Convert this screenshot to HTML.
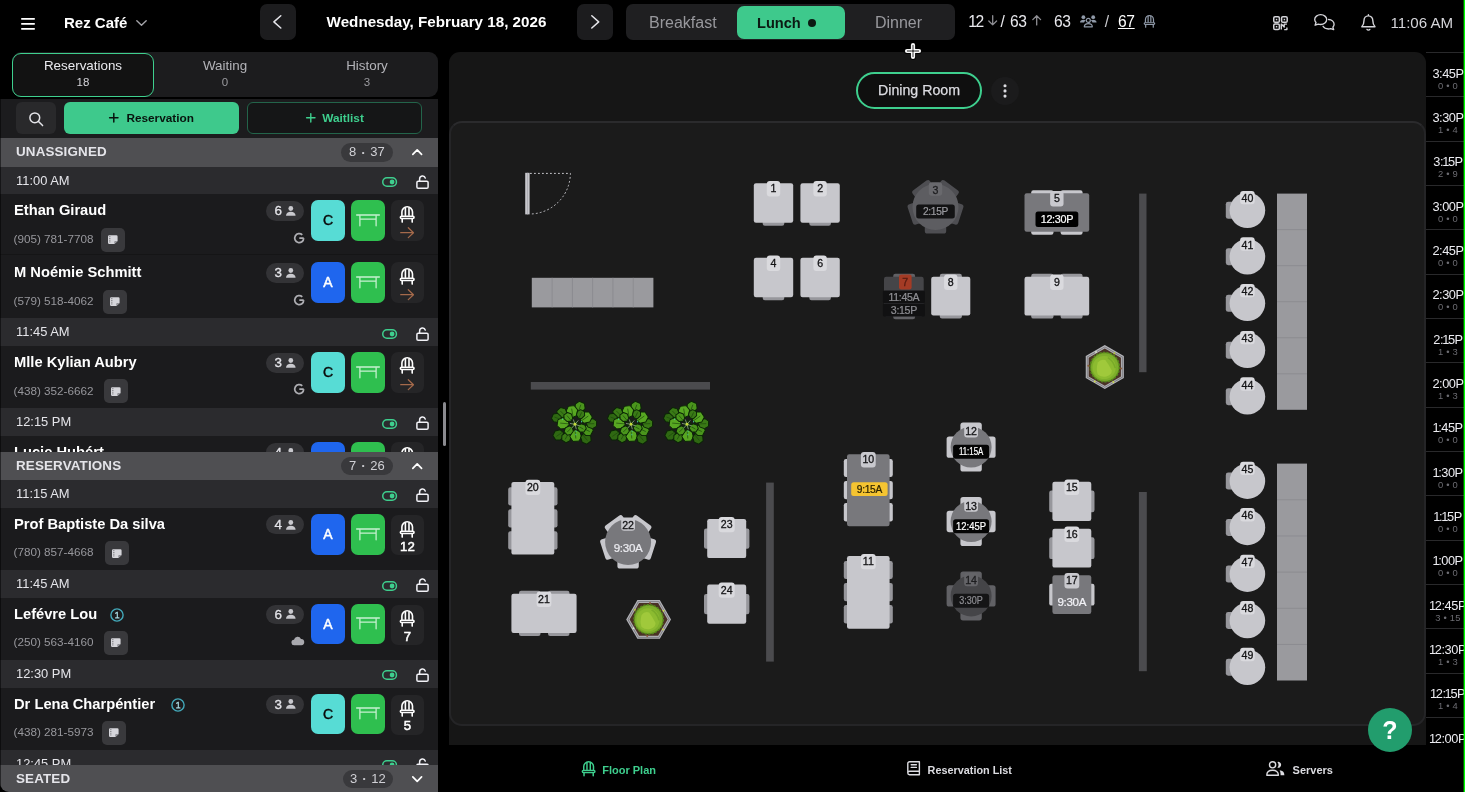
<!DOCTYPE html>
<html lang="en">
<head>
<meta charset="utf-8">
<title>Rez Café – Floor Plan</title>
<style>
*{box-sizing:border-box;margin:0;padding:0}
html,body{width:1465px;height:792px;overflow:hidden;background:#000}
body{font-family:"Liberation Sans",sans-serif;color:#fff;position:relative;-webkit-font-smoothing:antialiased}
.abs{position:absolute}
svg{display:block;overflow:visible}
#topbar,#left,#main,#tl,#nav,#help{will-change:transform}
#left:after{content:'';position:absolute;left:0;top:46.8px;width:1.3px;height:700px;background:rgba(0,0,0,.5)}
/* ---------- top bar ---------- */
#topbar{position:absolute;left:0;top:0;width:1465px;height:52px;background:#000}
.navbtn{position:absolute;top:4px;width:36px;height:36px;border-radius:7px;background:#1c1c1e}
.brand{position:absolute;left:64px;top:13px;font-size:15px;font-weight:700;line-height:20px;color:#fff;white-space:nowrap}
.date{position:absolute;left:296px;width:281px;top:11.7px;text-align:center;font-size:15.2px;font-weight:700;line-height:20px;color:#fff;white-space:nowrap}
.seg{position:absolute;left:626px;top:4px;width:329px;height:36px;border-radius:7px;background:#1f1f21}
.seg span{position:absolute;top:9px;line-height:20px;font-size:16px;color:#98989d;white-space:nowrap;transform:translateX(-50%)}
.seg .on{position:absolute;left:110.5px;top:1.5px;width:108px;height:33px;border-radius:7px;background:#3ec98c}
.seg .on b{position:absolute;left:20.5px;top:7.3px;line-height:20px;font-size:14.6px;font-weight:700;color:#0b1a13}
.seg .on i{position:absolute;left:71px;top:13.2px;width:8.5px;height:8.5px;border-radius:50%;background:#0b1a13}
.stat{position:absolute;top:11.8px;line-height:20px;font-size:15.6px;letter-spacing:-.35px;color:#e9e9ee;white-space:nowrap}
.clock{position:absolute;left:1390.5px;top:13px;line-height:20px;font-size:15.1px;color:#d4d4d9;white-space:nowrap}
/* ---------- left panel ---------- */
#left{position:absolute;left:0;top:52px;width:438px;height:740px;overflow:hidden;border-radius:0 0 0 9px}
.tabs{position:absolute;left:12px;top:0;width:426px;height:45px;background:#1c1c1e;border-radius:9px}
.tab{position:absolute;top:0;width:142px;height:45px;text-align:center;color:#b4b4b9}
.tab b{display:block;font-weight:400;font-size:13.4px;line-height:16px;margin-top:5.6px}
.tab i{display:block;font-style:normal;font-size:11.5px;line-height:14px;margin-top:1.6px;color:#9a9a9f}
.tab.on{top:.5px;height:44px;border:1.5px solid #3ecf8e;border-radius:9px;background:#121212;color:#e9e9ee}
.tab.on b{margin-top:4.4px}
.tab.on i{color:#d4d4d9}
.tools{position:absolute;left:0;top:46.8px;width:438px;height:40px;background:#1c1c1e}
.tbtn{position:absolute;top:3.7px;height:32px;border-radius:6px}
.sec{position:absolute;left:0;width:438px;height:28.2px;background:#4f4f52}
.sec b{position:absolute;left:16px;top:6px;line-height:16px;font-size:13.4px;font-weight:700;letter-spacing:.15px;color:#e4e4e9}
.sec .pill{position:absolute;top:4.8px;height:18.6px;border-radius:10px;background:#39393c;color:#d0d0d5;font-size:13px;line-height:18.6px;text-align:center;white-space:nowrap}
.sec .pill s{text-decoration:none;font-size:8px;position:relative;top:-1.5px;margin:0 2px}
.list{position:absolute;left:0;width:438px;overflow:hidden;background:#1b1b1d}
.th{position:absolute;left:0;width:438px;height:27.8px;background:#2b2b2e}
.th b{position:absolute;left:16px;top:6px;line-height:16px;font-size:12.9px;font-weight:400;color:#e4e4e9}
.row{position:absolute;left:0;width:438px;height:62px;background:#1b1b1d}
.row + .row:before{content:'';position:absolute;left:0;right:0;top:-2px;height:1px;background:rgba(0,0,0,.22)}
.row .nm{position:absolute;left:14px;top:6px;line-height:20px;font-size:14.7px;font-weight:700;color:#fff;white-space:nowrap}
.row .ph{position:absolute;left:13.5px;top:36.5px;line-height:16px;font-size:11.7px;color:#97979c;white-space:nowrap}
.row .note{position:absolute;top:33.3px;width:24px;height:24px;border-radius:5px;background:#39393c}
.row .pty{position:absolute;left:266px;top:7px;width:38px;height:19.4px;border-radius:10px;background:#333336;color:#e4e4e9;font-size:13.4px;line-height:19.4px}
.row .pty b{position:absolute;left:8.5px;top:0;font-weight:400;-webkit-text-stroke:.3px #e4e4e9}
.box{position:absolute;top:6px;width:34px;height:40.6px;border-radius:7px}
.box.srv{left:311px;text-align:center;font-size:14px;font-weight:400;-webkit-text-stroke:.45px currentColor;line-height:41.6px}
.box.tbl{left:351px;width:33.5px;background:#2fbf4f}
.box.chr{left:390.7px;width:33.5px;background:#252527}
.box.chr b{position:absolute;left:0;width:33.5px;top:23.9px;text-align:center;font-size:13.2px;line-height:16px;font-weight:400;-webkit-text-stroke:.5px #fff;color:#fff}
</style>
</head>
<body>

<div id="topbar">
<svg class="abs" style="left:21px;top:18px" width="14" height="12" viewBox="0 0 14 12" ><g fill="#fff"><rect y=".1" width="14" height="1.700" rx=".8"/><rect y="5.100" width="14" height="1.700" rx=".8"/><rect y="10.100" width="14" height="1.700" rx=".8"/></g></svg>
<div class="brand">Rez Café</div>
<svg class="abs" style="left:135.8px;top:19.6px" width="11" height="6.2" viewBox="0 0 11 6.2" ><path d="M.8 .8L5.5 5.3L10.2 .8" fill="none" stroke="#a4a4a9" stroke-width="1.4" stroke-linecap="round" stroke-linejoin="round"/></svg>
<div class="navbtn" style="left:260px"></div><svg class="abs" style="left:273.2px;top:15px" width="8.6" height="13.8" viewBox="0 0 8.6 13.8" ><path d="M7.8 .8L.9 6.9L7.8 13.0" fill="none" stroke="#e4e4e9" stroke-width="1.5" stroke-linecap="round" stroke-linejoin="round"/></svg>
<div class="date">Wednesday, February 18, 2026</div>
<div class="navbtn" style="left:577px"></div><svg class="abs" style="left:590.6px;top:15px" width="8.6" height="13.8" viewBox="0 0 8.6 13.8" ><path d="M.8 .8L7.699999999999999 6.9L.8 13.0" fill="none" stroke="#e4e4e9" stroke-width="1.5" stroke-linecap="round" stroke-linejoin="round"/></svg>
<div class="seg"><span style="left:56.8px">Breakfast</span><div class="on"><b>Lunch</b><i></i></div><span style="left:272.5px">Dinner</span></div>
<div class="stat" style="left:968.2px;letter-spacing:-1.4px">12</div>
<svg class="abs" style="left:987.8px;top:15.4px" width="9.4" height="10.6" viewBox="0 0 9.4 10.6" ><g fill="none" stroke="#8e8e93" stroke-width="1.3" stroke-linecap="round" stroke-linejoin="round"><path d="M4.7 .7V9.8M.8 6L4.7 9.9L8.6 6"/></g></svg>
<div class="stat" style="left:1000.5px">/</div>
<div class="stat" style="left:1010px">63</div>
<svg class="abs" style="left:1032px;top:14.6px" width="9.4" height="10.6" viewBox="0 0 9.4 10.6" ><g fill="none" stroke="#8e8e93" stroke-width="1.3" stroke-linecap="round" stroke-linejoin="round"><path d="M4.7 9.9V.8M.8 4.6L4.7 .7L8.6 4.6"/></g></svg>
<div class="stat" style="left:1054px">63</div>
<svg class="abs" style="left:1080.4px;top:15px" width="16.6" height="12.4" viewBox="0 0 16.6 12.4" ><g fill="#8f99a8"><circle cx="3.4" cy="2.2" r="1.9"/><circle cx="13.2" cy="2.2" r="1.9"/><path d="M0 7.6C0 5.6 1.4 4.7 3.4 4.7C4.4 4.7 5.2 4.9 5.8 5.4C4.7 6 4.2 6.9 4.1 7.6Z"/><path d="M16.6 7.6C16.6 5.6 15.2 4.7 13.2 4.7C12.2 4.7 11.4 4.9 10.8 5.4C11.9 6 12.4 6.9 12.5 7.6Z"/></g><g fill="none" stroke="#8f99a8" stroke-width="1.2"><circle cx="8.3" cy="5.4" r="2"/><path d="M4.3 11.8C4.3 9.6 6 8.6 8.3 8.6S12.3 9.6 12.3 11.8Z" stroke-linejoin="round"/></g></svg>
<div class="stat" style="left:1104.8px;color:#c9c9ce">/</div>
<div class="stat" style="left:1118px;text-decoration:underline;text-underline-offset:.6px;text-decoration-thickness:1.4px;color:#fff">67</div>
<svg class="abs" style="left:1144px;top:15px" width="10.94" height="12.92" viewBox="0 0 14.4 17" ><g fill="none" stroke="#8f99a8" stroke-width="1.6" stroke-linecap="round" stroke-linejoin="round"><path d="M1.900 9.500V6.100A5.300 5.300 0 0 1 12.500 6.100V9.500"/><path d="M5.400 1.700V9.300M9 1.700V9.300"/><path d="M1.500 10.200H12.900A1 1 0 0 1 12.900 12.500H1.500A1 1 0 0 1 1.500 10.200Z"/><path d="M2.200 12.700V16.100M12.200 12.700V16.100"/></g></svg>
<svg class="abs" style="left:1273px;top:15.7px" width="15" height="14.2" viewBox="0 0 15 14.2" ><rect x="0.75" y="0.75" width="5.6" height="5.6" rx="1.3" fill="none" stroke="#d4d4d9" stroke-width="1.5"/><rect x="2.8" y="2.8" width="1.5" height="1.5" fill="#d4d4d9"/><rect x="8.6" y="0.75" width="5.6" height="5.6" rx="1.3" fill="none" stroke="#d4d4d9" stroke-width="1.5"/><rect x="10.649999999999999" y="2.8" width="1.5" height="1.5" fill="#d4d4d9"/><rect x="0.75" y="7.9" width="5.6" height="5.6" rx="1.3" fill="none" stroke="#d4d4d9" stroke-width="1.5"/><rect x="2.8" y="9.95" width="1.5" height="1.5" fill="#d4d4d9"/><path d="M8.3 13.6V8.1L11.2 11V8.1H13.9M11.2 13.6H13.9V11.4" fill="none" stroke="#d4d4d9" stroke-width="1.4" stroke-linejoin="round"/></svg>
<svg class="abs" style="left:1314.4px;top:14.4px" width="20.8" height="16.4" viewBox="0 0 20.8 16.4" ><g fill="none" stroke="#d4d4d9" stroke-width="1.35" stroke-linejoin="round" stroke-linecap="round"><path d="M6.7 .7C10 .7 12.7 2.9 12.7 5.6S10 10.5 6.7 10.5C5.8 10.5 5 10.4 4.300 10.1L1.1 11.2L2 8.600C1.200 7.800 .7 6.700 .7 5.600C.7 2.900 3.400 .700 6.700 .700Z"/><path d="M14.6 5.500C17.700 5.700 20.100 7.700 20.100 10.200C20.100 11.300 19.600 12.300 18.900 13.100L19.700 15.600L16.700 14.600C16 14.900 15.200 15 14.400 15C12 15 9.900 13.900 9 12.300"/></g></svg>
<svg class="abs" style="left:1361.2px;top:14.2px" width="14.8" height="16.8" viewBox="0 0 14.8 16.8" ><g fill="none" stroke="#d4d4d9" stroke-width="1.4" stroke-linejoin="round" stroke-linecap="round"><path d="M7.4 .8V1.900M7.400 1.900C4.600 1.900 3 4.100 3 6.600C3 10.300 1.800 11.700 .8 12.700H14C13 11.700 11.800 10.300 11.800 6.600C11.800 4.100 10.200 1.900 7.400 1.900Z"/><path d="M6 15.400C6.300 15.900 6.800 16.100 7.400 16.100S8.500 15.900 8.800 15.400"/></g></svg>
<div class="clock">11:06 AM</div>
</div>
<div id="left">
<div class="tabs">
<div class="tab on" style="left:0px"><b>Reservations</b><i>18</i></div>
<div class="tab" style="left:142px"><b>Waiting</b><i>0</i></div>
<div class="tab" style="left:284px"><b>History</b><i>3</i></div>
</div>
<div class="tools">
<div class="tbtn" style="left:16px;width:40px;background:#29292b"></div>
<svg class="abs" style="left:28.6px;top:13px" width="14.4" height="14.4" viewBox="0 0 14.4 14.4" ><g fill="none" stroke="#e4e4e9" stroke-width="1.5" stroke-linecap="round"><circle cx="5.8" cy="5.8" r="4.9"/><path d="M9.5 9.500L13.600 13.600"/></g></svg>
<div class="tbtn" style="left:64px;width:175px;background:#3ec98c"></div>
<svg class="abs" style="left:109.2px;top:14.7px" width="9.6" height="9.6" viewBox="0 0 9.6 9.6" ><path d="M4.8 .6V9M.6 4.800H9" stroke="#08140e" stroke-width="1.5" stroke-linecap="round"/></svg>
<div class="abs" style="left:126.4px;top:11.6px;font-size:11.8px;font-weight:700;line-height:16px;color:#08140e">Reservation</div>
<div class="tbtn" style="left:247px;width:175px;background:#151617;border:1px solid #23644a"></div>
<svg class="abs" style="left:305.6px;top:14.7px" width="9.6" height="9.6" viewBox="0 0 9.6 9.6" ><path d="M4.8 .6V9M.6 4.800H9" stroke="#3ecf8e" stroke-width="1.4" stroke-linecap="round"/></svg>
<div class="abs" style="left:322.3px;top:11.6px;font-size:11.8px;font-weight:700;line-height:16px;color:#3ecf8e">Waitlist</div>
</div>
<div class="sec" style="top:86.4px"><b>UNASSIGNED</b><div class="pill" style="left:340.8px;width:52.2px">8 <s>•</s> 37</div><svg class="abs" style="left:411.6px;top:10.8px" width="10.4" height="6.2" viewBox="0 0 10.4 6.2" ><path d="M.8 5.4L5.2 .9L9.6 5.4" fill="none" stroke="#fff" stroke-width="1.7" stroke-linecap="round" stroke-linejoin="round"/></svg></div>
<div class="list" style="top:114.6px;height:285.4px">
<div class="th" style="top:0px"><b>11:00 AM</b><svg class="abs" style="left:382px;top:10.7px" width="15.2" height="10" viewBox="0 0 15.2 10" ><rect x=".75" y=".75" width="13.7" height="8.5" rx="4.25" fill="none" stroke="#3ecf8e" stroke-width="1.5"/><circle cx="10.1" cy="5" r="2.4" fill="#3ecf8e"/></svg><svg class="abs" style="left:416px;top:8.3px" width="13" height="14.2" viewBox="0 0 13 14.2" ><g fill="none" stroke="#f2f2f7" stroke-width="1.5" stroke-linecap="round" stroke-linejoin="round"><rect x=".9" y="6.3" width="11.2" height="7" rx="1.3"/><path d="M3.6 6.1V3.9A2.9 2.9 0 0 1 9.3 3.1"/></g></svg></div>
<div class="row" style="top:27.8px"><div class="nm">Ethan Giraud</div><div class="ph">(905) 781-7708</div><div class="note" style="left:101.4px"></div><svg class="abs" style="left:108.2px;top:40.7px" width="9.6" height="9.2" viewBox="0 0 11 10" ><path d="M1.4 0H9.6A1.4 1.4 0 0 1 11 1.4V6.6L7.4 10H1.4A1.4 1.4 0 0 1 0 8.6V1.4A1.4 1.4 0 0 1 1.4 0Z" fill="#d6d6db"/><path d="M7.2 10V7.6A1 1 0 0 1 8.2 6.6H11Z" fill="#8f8f95"/><path d="M2.1 1.2V8.8" stroke="#39393c" stroke-width=".9" stroke-dasharray="1 1"/></svg><div class="pty"><b>6</b></div><svg class="abs" style="left:285.6px;top:11.6px" width="9.6" height="9.79" viewBox="0 0 10 10.2" ><g fill="#c9c9ce"><circle cx="5" cy="2.6" r="2.5"/><path d="M0 10.2C0 7.2 2.2 5.9 5 5.9S10 7.2 10 10.2Z"/></g></svg><svg class="abs" style="left:294px;top:38.2px" width="10.5" height="10.4" viewBox="0 0 10.5 10.4" ><path d="M9.7 5.2H5.3M9.7 5.2A4.5 4.5 0 1 1 8.3 1.9" fill="none" stroke="#aeaeb3" stroke-width="1.7" stroke-linecap="butt"/></svg><div class="box srv" style="background:#57dcd5;color:#0a0a0a">C</div><div class="box tbl"></div><svg class="abs" style="left:355.8px;top:19.6px" width="24" height="12.5" viewBox="0 0 24 12.5" ><g fill="none" stroke="#c8f1d2" stroke-width="1.25" stroke-linecap="round"><path d="M.7 .9H23.300" stroke-width="1.5"/><path d="M3.900 1.500V11.800M20.100 1.500V11.800M3.900 5.100H20.100"/></g></svg><div class="box chr"></div><svg class="abs" style="left:400px;top:11.3px" width="14.4" height="17.0" viewBox="0 0 14.4 17" ><g fill="none" stroke="#fff" stroke-width="1.6" stroke-linecap="round" stroke-linejoin="round"><path d="M1.900 9.500V6.100A5.300 5.300 0 0 1 12.500 6.100V9.500"/><path d="M5.400 1.700V9.300M9 1.700V9.300"/><path d="M1.500 10.200H12.900A1 1 0 0 1 12.900 12.500H1.500A1 1 0 0 1 1.500 10.200Z"/><path d="M2.200 12.700V16.100M12.200 12.700V16.100"/></g></svg><svg class="abs" style="left:400.2px;top:32.4px" width="14.2" height="11.4" viewBox="0 0 14.2 11.4" ><g fill="none" stroke="#a56a4b" stroke-width="1.2" stroke-linecap="round" stroke-linejoin="round"><path d="M.7 5.700H13.500M8.300 .700L13.500 5.700L8.300 10.700"/></g></svg></div>
<div class="row" style="top:89.8px"><div class="nm">M Noémie Schmitt</div><div class="ph">(579) 518-4062</div><div class="note" style="left:103px"></div><svg class="abs" style="left:109.8px;top:40.7px" width="9.6" height="9.2" viewBox="0 0 11 10" ><path d="M1.4 0H9.6A1.4 1.4 0 0 1 11 1.4V6.6L7.4 10H1.4A1.4 1.4 0 0 1 0 8.6V1.4A1.4 1.4 0 0 1 1.4 0Z" fill="#d6d6db"/><path d="M7.2 10V7.6A1 1 0 0 1 8.2 6.6H11Z" fill="#8f8f95"/><path d="M2.1 1.2V8.8" stroke="#39393c" stroke-width=".9" stroke-dasharray="1 1"/></svg><div class="pty"><b>3</b></div><svg class="abs" style="left:285.6px;top:11.6px" width="9.6" height="9.79" viewBox="0 0 10 10.2" ><g fill="#c9c9ce"><circle cx="5" cy="2.6" r="2.5"/><path d="M0 10.2C0 7.2 2.2 5.9 5 5.9S10 7.2 10 10.2Z"/></g></svg><svg class="abs" style="left:294px;top:38.2px" width="10.5" height="10.4" viewBox="0 0 10.5 10.4" ><path d="M9.7 5.2H5.3M9.7 5.2A4.5 4.5 0 1 1 8.3 1.9" fill="none" stroke="#aeaeb3" stroke-width="1.7" stroke-linecap="butt"/></svg><div class="box srv" style="background:#1f66ee;color:#fff">A</div><div class="box tbl"></div><svg class="abs" style="left:355.8px;top:19.6px" width="24" height="12.5" viewBox="0 0 24 12.5" ><g fill="none" stroke="#c8f1d2" stroke-width="1.25" stroke-linecap="round"><path d="M.7 .9H23.300" stroke-width="1.5"/><path d="M3.900 1.500V11.800M20.100 1.500V11.800M3.900 5.100H20.100"/></g></svg><div class="box chr"></div><svg class="abs" style="left:400px;top:11.3px" width="14.4" height="17.0" viewBox="0 0 14.4 17" ><g fill="none" stroke="#fff" stroke-width="1.6" stroke-linecap="round" stroke-linejoin="round"><path d="M1.900 9.500V6.100A5.300 5.300 0 0 1 12.500 6.100V9.500"/><path d="M5.400 1.700V9.300M9 1.700V9.300"/><path d="M1.500 10.200H12.900A1 1 0 0 1 12.900 12.500H1.500A1 1 0 0 1 1.500 10.200Z"/><path d="M2.200 12.700V16.100M12.200 12.700V16.100"/></g></svg><svg class="abs" style="left:400.2px;top:32.4px" width="14.2" height="11.4" viewBox="0 0 14.2 11.4" ><g fill="none" stroke="#a56a4b" stroke-width="1.2" stroke-linecap="round" stroke-linejoin="round"><path d="M.7 5.700H13.500M8.300 .700L13.500 5.700L8.300 10.700"/></g></svg></div>
<div class="th" style="top:151.8px"><b>11:45 AM</b><svg class="abs" style="left:382px;top:10.7px" width="15.2" height="10" viewBox="0 0 15.2 10" ><rect x=".75" y=".75" width="13.7" height="8.5" rx="4.25" fill="none" stroke="#3ecf8e" stroke-width="1.5"/><circle cx="10.1" cy="5" r="2.4" fill="#3ecf8e"/></svg><svg class="abs" style="left:416px;top:8.3px" width="13" height="14.2" viewBox="0 0 13 14.2" ><g fill="none" stroke="#f2f2f7" stroke-width="1.5" stroke-linecap="round" stroke-linejoin="round"><rect x=".9" y="6.3" width="11.2" height="7" rx="1.3"/><path d="M3.6 6.1V3.9A2.9 2.9 0 0 1 9.3 3.1"/></g></svg></div>
<div class="row" style="top:179.60000000000002px"><div class="nm">Mlle Kylian Aubry</div><div class="ph">(438) 352-6662</div><div class="note" style="left:104.4px"></div><svg class="abs" style="left:111.2px;top:40.7px" width="9.6" height="9.2" viewBox="0 0 11 10" ><path d="M1.4 0H9.6A1.4 1.4 0 0 1 11 1.4V6.6L7.4 10H1.4A1.4 1.4 0 0 1 0 8.6V1.4A1.4 1.4 0 0 1 1.4 0Z" fill="#d6d6db"/><path d="M7.2 10V7.6A1 1 0 0 1 8.2 6.6H11Z" fill="#8f8f95"/><path d="M2.1 1.2V8.8" stroke="#39393c" stroke-width=".9" stroke-dasharray="1 1"/></svg><div class="pty"><b>3</b></div><svg class="abs" style="left:285.6px;top:11.6px" width="9.6" height="9.79" viewBox="0 0 10 10.2" ><g fill="#c9c9ce"><circle cx="5" cy="2.6" r="2.5"/><path d="M0 10.2C0 7.2 2.2 5.9 5 5.9S10 7.2 10 10.2Z"/></g></svg><svg class="abs" style="left:294px;top:38.2px" width="10.5" height="10.4" viewBox="0 0 10.5 10.4" ><path d="M9.7 5.2H5.3M9.7 5.2A4.5 4.5 0 1 1 8.3 1.9" fill="none" stroke="#aeaeb3" stroke-width="1.7" stroke-linecap="butt"/></svg><div class="box srv" style="background:#57dcd5;color:#0a0a0a">C</div><div class="box tbl"></div><svg class="abs" style="left:355.8px;top:19.6px" width="24" height="12.5" viewBox="0 0 24 12.5" ><g fill="none" stroke="#c8f1d2" stroke-width="1.25" stroke-linecap="round"><path d="M.7 .9H23.300" stroke-width="1.5"/><path d="M3.900 1.500V11.800M20.100 1.500V11.800M3.900 5.100H20.100"/></g></svg><div class="box chr"></div><svg class="abs" style="left:400px;top:11.3px" width="14.4" height="17.0" viewBox="0 0 14.4 17" ><g fill="none" stroke="#fff" stroke-width="1.6" stroke-linecap="round" stroke-linejoin="round"><path d="M1.900 9.500V6.100A5.300 5.300 0 0 1 12.500 6.100V9.500"/><path d="M5.400 1.700V9.300M9 1.700V9.300"/><path d="M1.500 10.200H12.900A1 1 0 0 1 12.900 12.500H1.500A1 1 0 0 1 1.500 10.200Z"/><path d="M2.200 12.700V16.100M12.200 12.700V16.100"/></g></svg><svg class="abs" style="left:400.2px;top:32.4px" width="14.2" height="11.4" viewBox="0 0 14.2 11.4" ><g fill="none" stroke="#a56a4b" stroke-width="1.2" stroke-linecap="round" stroke-linejoin="round"><path d="M.7 5.700H13.500M8.300 .700L13.500 5.700L8.300 10.700"/></g></svg></div>
<div class="th" style="top:241.60000000000002px"><b>12:15 PM</b><svg class="abs" style="left:382px;top:10.7px" width="15.2" height="10" viewBox="0 0 15.2 10" ><rect x=".75" y=".75" width="13.7" height="8.5" rx="4.25" fill="none" stroke="#3ecf8e" stroke-width="1.5"/><circle cx="10.1" cy="5" r="2.4" fill="#3ecf8e"/></svg><svg class="abs" style="left:416px;top:8.3px" width="13" height="14.2" viewBox="0 0 13 14.2" ><g fill="none" stroke="#f2f2f7" stroke-width="1.5" stroke-linecap="round" stroke-linejoin="round"><rect x=".9" y="6.3" width="11.2" height="7" rx="1.3"/><path d="M3.6 6.1V3.9A2.9 2.9 0 0 1 9.3 3.1"/></g></svg></div>
<div class="row" style="top:269.40000000000003px"><div class="nm">Lucie Hubért</div><div class="ph">(514) 555-0199</div><div class="note" style="left:102px"></div><svg class="abs" style="left:108.8px;top:40.7px" width="9.6" height="9.2" viewBox="0 0 11 10" ><path d="M1.4 0H9.6A1.4 1.4 0 0 1 11 1.4V6.6L7.4 10H1.4A1.4 1.4 0 0 1 0 8.6V1.4A1.4 1.4 0 0 1 1.4 0Z" fill="#d6d6db"/><path d="M7.2 10V7.6A1 1 0 0 1 8.2 6.6H11Z" fill="#8f8f95"/><path d="M2.1 1.2V8.8" stroke="#39393c" stroke-width=".9" stroke-dasharray="1 1"/></svg><div class="pty"><b>4</b></div><svg class="abs" style="left:285.6px;top:11.6px" width="9.6" height="9.79" viewBox="0 0 10 10.2" ><g fill="#c9c9ce"><circle cx="5" cy="2.6" r="2.5"/><path d="M0 10.2C0 7.2 2.2 5.9 5 5.9S10 7.2 10 10.2Z"/></g></svg><svg class="abs" style="left:294px;top:38.2px" width="10.5" height="10.4" viewBox="0 0 10.5 10.4" ><path d="M9.7 5.2H5.3M9.7 5.2A4.5 4.5 0 1 1 8.3 1.9" fill="none" stroke="#aeaeb3" stroke-width="1.7" stroke-linecap="butt"/></svg><div class="box srv" style="background:#1f66ee;color:#fff">A</div><div class="box tbl"></div><svg class="abs" style="left:355.8px;top:19.6px" width="24" height="12.5" viewBox="0 0 24 12.5" ><g fill="none" stroke="#c8f1d2" stroke-width="1.25" stroke-linecap="round"><path d="M.7 .9H23.300" stroke-width="1.5"/><path d="M3.900 1.500V11.800M20.100 1.500V11.800M3.900 5.100H20.100"/></g></svg><div class="box chr"></div><svg class="abs" style="left:400px;top:11.3px" width="14.4" height="17.0" viewBox="0 0 14.4 17" ><g fill="none" stroke="#fff" stroke-width="1.6" stroke-linecap="round" stroke-linejoin="round"><path d="M1.900 9.500V6.100A5.300 5.300 0 0 1 12.500 6.100V9.500"/><path d="M5.400 1.700V9.300M9 1.700V9.300"/><path d="M1.500 10.200H12.900A1 1 0 0 1 12.900 12.500H1.500A1 1 0 0 1 1.500 10.200Z"/><path d="M2.200 12.700V16.100M12.200 12.700V16.100"/></g></svg><svg class="abs" style="left:400.2px;top:32.4px" width="14.2" height="11.4" viewBox="0 0 14.2 11.4" ><g fill="none" stroke="#a56a4b" stroke-width="1.2" stroke-linecap="round" stroke-linejoin="round"><path d="M.7 5.700H13.500M8.300 .700L13.500 5.700L8.300 10.700"/></g></svg></div>
</div>
<div class="sec" style="top:400px"><b>RESERVATIONS</b><div class="pill" style="left:340.8px;width:52.2px">7 <s>•</s> 26</div><svg class="abs" style="left:411.6px;top:10.8px" width="10.4" height="6.2" viewBox="0 0 10.4 6.2" ><path d="M.8 5.4L5.2 .9L9.6 5.4" fill="none" stroke="#fff" stroke-width="1.7" stroke-linecap="round" stroke-linejoin="round"/></svg></div>
<div class="list" style="top:428.2px;height:284.8px">
<div class="th" style="top:0px"><b>11:15 AM</b><svg class="abs" style="left:382px;top:10.7px" width="15.2" height="10" viewBox="0 0 15.2 10" ><rect x=".75" y=".75" width="13.7" height="8.5" rx="4.25" fill="none" stroke="#3ecf8e" stroke-width="1.5"/><circle cx="10.1" cy="5" r="2.4" fill="#3ecf8e"/></svg><svg class="abs" style="left:416px;top:8.3px" width="13" height="14.2" viewBox="0 0 13 14.2" ><g fill="none" stroke="#f2f2f7" stroke-width="1.5" stroke-linecap="round" stroke-linejoin="round"><rect x=".9" y="6.3" width="11.2" height="7" rx="1.3"/><path d="M3.6 6.1V3.9A2.9 2.9 0 0 1 9.3 3.1"/></g></svg></div>
<div class="row" style="top:27.8px"><div class="nm">Prof Baptiste Da silva</div><div class="ph">(780) 857-4668</div><div class="note" style="left:105.2px"></div><svg class="abs" style="left:112.0px;top:40.7px" width="9.6" height="9.2" viewBox="0 0 11 10" ><path d="M1.4 0H9.6A1.4 1.4 0 0 1 11 1.4V6.6L7.4 10H1.4A1.4 1.4 0 0 1 0 8.6V1.4A1.4 1.4 0 0 1 1.4 0Z" fill="#d6d6db"/><path d="M7.2 10V7.6A1 1 0 0 1 8.2 6.6H11Z" fill="#8f8f95"/><path d="M2.1 1.2V8.8" stroke="#39393c" stroke-width=".9" stroke-dasharray="1 1"/></svg><div class="pty"><b>4</b></div><svg class="abs" style="left:285.6px;top:11.6px" width="9.6" height="9.79" viewBox="0 0 10 10.2" ><g fill="#c9c9ce"><circle cx="5" cy="2.6" r="2.5"/><path d="M0 10.2C0 7.2 2.2 5.9 5 5.9S10 7.2 10 10.2Z"/></g></svg><div class="box srv" style="background:#1f66ee;color:#fff">A</div><div class="box tbl"></div><svg class="abs" style="left:355.8px;top:19.6px" width="24" height="12.5" viewBox="0 0 24 12.5" ><g fill="none" stroke="#c8f1d2" stroke-width="1.25" stroke-linecap="round"><path d="M.7 .9H23.300" stroke-width="1.5"/><path d="M3.900 1.500V11.800M20.100 1.500V11.800M3.900 5.100H20.100"/></g></svg><div class="box chr" style="top:7px;height:40px"><b>12</b></div><svg class="abs" style="left:400px;top:12.6px" width="14.4" height="17.0" viewBox="0 0 14.4 17" ><g fill="none" stroke="#fff" stroke-width="1.6" stroke-linecap="round" stroke-linejoin="round"><path d="M1.900 9.500V6.100A5.300 5.300 0 0 1 12.500 6.100V9.500"/><path d="M5.400 1.700V9.300M9 1.700V9.300"/><path d="M1.500 10.200H12.900A1 1 0 0 1 12.900 12.500H1.500A1 1 0 0 1 1.500 10.200Z"/><path d="M2.200 12.700V16.100M12.200 12.700V16.100"/></g></svg></div>
<div class="th" style="top:89.8px"><b>11:45 AM</b><svg class="abs" style="left:382px;top:10.7px" width="15.2" height="10" viewBox="0 0 15.2 10" ><rect x=".75" y=".75" width="13.7" height="8.5" rx="4.25" fill="none" stroke="#3ecf8e" stroke-width="1.5"/><circle cx="10.1" cy="5" r="2.4" fill="#3ecf8e"/></svg><svg class="abs" style="left:416px;top:8.3px" width="13" height="14.2" viewBox="0 0 13 14.2" ><g fill="none" stroke="#f2f2f7" stroke-width="1.5" stroke-linecap="round" stroke-linejoin="round"><rect x=".9" y="6.3" width="11.2" height="7" rx="1.3"/><path d="M3.6 6.1V3.9A2.9 2.9 0 0 1 9.3 3.1"/></g></svg></div>
<div class="row" style="top:117.6px"><div class="nm">Lefévre Lou</div><div class="ph">(250) 563-4160</div><div class="note" style="left:104px"></div><svg class="abs" style="left:110.8px;top:40.7px" width="9.6" height="9.2" viewBox="0 0 11 10" ><path d="M1.4 0H9.6A1.4 1.4 0 0 1 11 1.4V6.6L7.4 10H1.4A1.4 1.4 0 0 1 0 8.6V1.4A1.4 1.4 0 0 1 1.4 0Z" fill="#d6d6db"/><path d="M7.2 10V7.6A1 1 0 0 1 8.2 6.6H11Z" fill="#8f8f95"/><path d="M2.1 1.2V8.8" stroke="#39393c" stroke-width=".9" stroke-dasharray="1 1"/></svg><svg class="abs" style="left:109.8px;top:10.1px" width="14" height="14" viewBox="0 0 14 14" ><circle cx="7" cy="7" r="6.1" fill="none" stroke="#43a9ba" stroke-width="1.4"/><path d="M5.600 5.300L7.300 4.200V9.900M5.600 9.900H9" fill="none" stroke="#a9dbe4" stroke-width="1.15" stroke-linecap="round" stroke-linejoin="round"/></svg><div class="pty"><b>6</b></div><svg class="abs" style="left:285.6px;top:11.6px" width="9.6" height="9.79" viewBox="0 0 10 10.2" ><g fill="#c9c9ce"><circle cx="5" cy="2.6" r="2.5"/><path d="M0 10.2C0 7.2 2.2 5.9 5 5.9S10 7.2 10 10.2Z"/></g></svg><svg class="abs" style="left:291.2px;top:38.6px" width="13.4" height="9.4" viewBox="0 0 13.4 9.4" ><path d="M3.3 9.2A2.7 2.7 0 0 1 3 3.8A3.7 3.7 0 0 1 10 3A3.1 3.1 0 0 1 10.3 9.2Z" fill="#a9a9ae"/></svg><div class="box srv" style="background:#1f66ee;color:#fff">A</div><div class="box tbl"></div><svg class="abs" style="left:355.8px;top:19.6px" width="24" height="12.5" viewBox="0 0 24 12.5" ><g fill="none" stroke="#c8f1d2" stroke-width="1.25" stroke-linecap="round"><path d="M.7 .9H23.300" stroke-width="1.5"/><path d="M3.900 1.500V11.800M20.100 1.500V11.800M3.900 5.100H20.100"/></g></svg><div class="box chr" style="top:7px;height:40px"><b>7</b></div><svg class="abs" style="left:400px;top:12.6px" width="14.4" height="17.0" viewBox="0 0 14.4 17" ><g fill="none" stroke="#fff" stroke-width="1.6" stroke-linecap="round" stroke-linejoin="round"><path d="M1.900 9.500V6.100A5.300 5.300 0 0 1 12.500 6.100V9.500"/><path d="M5.400 1.700V9.300M9 1.700V9.300"/><path d="M1.500 10.200H12.900A1 1 0 0 1 12.900 12.500H1.500A1 1 0 0 1 1.500 10.200Z"/><path d="M2.200 12.700V16.100M12.200 12.700V16.100"/></g></svg></div>
<div class="th" style="top:179.6px"><b>12:30 PM</b><svg class="abs" style="left:382px;top:10.7px" width="15.2" height="10" viewBox="0 0 15.2 10" ><rect x=".75" y=".75" width="13.7" height="8.5" rx="4.25" fill="none" stroke="#3ecf8e" stroke-width="1.5"/><circle cx="10.1" cy="5" r="2.4" fill="#3ecf8e"/></svg><svg class="abs" style="left:416px;top:8.3px" width="13" height="14.2" viewBox="0 0 13 14.2" ><g fill="none" stroke="#f2f2f7" stroke-width="1.5" stroke-linecap="round" stroke-linejoin="round"><rect x=".9" y="6.3" width="11.2" height="7" rx="1.3"/><path d="M3.6 6.1V3.9A2.9 2.9 0 0 1 9.3 3.1"/></g></svg></div>
<div class="row" style="top:207.4px"><div class="nm">Dr Lena Charpéntier</div><div class="ph">(438) 281-5973</div><div class="note" style="left:102.2px"></div><svg class="abs" style="left:109.0px;top:40.7px" width="9.6" height="9.2" viewBox="0 0 11 10" ><path d="M1.4 0H9.6A1.4 1.4 0 0 1 11 1.4V6.6L7.4 10H1.4A1.4 1.4 0 0 1 0 8.6V1.4A1.4 1.4 0 0 1 1.4 0Z" fill="#d6d6db"/><path d="M7.2 10V7.6A1 1 0 0 1 8.2 6.6H11Z" fill="#8f8f95"/><path d="M2.1 1.2V8.8" stroke="#39393c" stroke-width=".9" stroke-dasharray="1 1"/></svg><svg class="abs" style="left:170.8px;top:10.1px" width="14" height="14" viewBox="0 0 14 14" ><circle cx="7" cy="7" r="6.1" fill="none" stroke="#43a9ba" stroke-width="1.4"/><path d="M5.600 5.300L7.300 4.200V9.900M5.600 9.900H9" fill="none" stroke="#a9dbe4" stroke-width="1.15" stroke-linecap="round" stroke-linejoin="round"/></svg><div class="pty"><b>3</b></div><svg class="abs" style="left:285.6px;top:11.6px" width="9.6" height="9.79" viewBox="0 0 10 10.2" ><g fill="#c9c9ce"><circle cx="5" cy="2.6" r="2.5"/><path d="M0 10.2C0 7.2 2.2 5.9 5 5.9S10 7.2 10 10.2Z"/></g></svg><div class="box srv" style="background:#57dcd5;color:#0a0a0a">C</div><div class="box tbl"></div><svg class="abs" style="left:355.8px;top:19.6px" width="24" height="12.5" viewBox="0 0 24 12.5" ><g fill="none" stroke="#c8f1d2" stroke-width="1.25" stroke-linecap="round"><path d="M.7 .9H23.300" stroke-width="1.5"/><path d="M3.900 1.500V11.800M20.100 1.500V11.800M3.900 5.100H20.100"/></g></svg><div class="box chr" style="top:7px;height:40px"><b>5</b></div><svg class="abs" style="left:400px;top:12.6px" width="14.4" height="17.0" viewBox="0 0 14.4 17" ><g fill="none" stroke="#fff" stroke-width="1.6" stroke-linecap="round" stroke-linejoin="round"><path d="M1.900 9.500V6.100A5.300 5.300 0 0 1 12.500 6.100V9.500"/><path d="M5.400 1.700V9.300M9 1.700V9.300"/><path d="M1.500 10.200H12.900A1 1 0 0 1 12.900 12.500H1.500A1 1 0 0 1 1.500 10.200Z"/><path d="M2.200 12.700V16.100M12.200 12.700V16.100"/></g></svg></div>
<div class="th" style="top:269.4px"><b>12:45 PM</b><svg class="abs" style="left:382px;top:10.7px" width="15.2" height="10" viewBox="0 0 15.2 10" ><rect x=".75" y=".75" width="13.7" height="8.5" rx="4.25" fill="none" stroke="#3ecf8e" stroke-width="1.5"/><circle cx="10.1" cy="5" r="2.4" fill="#3ecf8e"/></svg><svg class="abs" style="left:416px;top:8.3px" width="13" height="14.2" viewBox="0 0 13 14.2" ><g fill="none" stroke="#f2f2f7" stroke-width="1.5" stroke-linecap="round" stroke-linejoin="round"><rect x=".9" y="6.3" width="11.2" height="7" rx="1.3"/><path d="M3.6 6.1V3.9A2.9 2.9 0 0 1 9.3 3.1"/></g></svg></div>
</div>
<div class="sec" style="top:713px"><b>SEATED</b><div class="pill" style="left:342.6px;width:50.4px">3 <s>•</s> 12</div><svg class="abs" style="left:411.6px;top:11.4px" width="10.4" height="6.2" viewBox="0 0 10.4 6.2" ><path d="M.8 .8L5.2 5.3L9.6 .8" fill="none" stroke="#fff" stroke-width="1.7" stroke-linecap="round" stroke-linejoin="round"/></svg></div>
</div>
<div class="abs" style="left:442.6px;top:401.6px;width:3.6px;height:44px;border-radius:2px;background:#8a8a8f"></div>
<style>
#main{position:absolute;left:449px;top:52px;width:976.6px;height:693px;background:#161616;border-radius:11px 11px 0 0;overflow:hidden}
#room{position:absolute;left:0;top:69px;width:976.6px;height:604.6px;background:#1b1b1b;border:2.4px solid #252527;border-top-color:#2b2b2d;border-radius:13px}
.rpill{position:absolute;left:407px;top:20.4px;width:126px;height:36.4px;border-radius:19px;border:2px solid #3ecf8e;background:#0f0f0f;text-align:center;font-size:14.2px;line-height:33.6px;color:#dcdce1;-webkit-text-stroke:.25px #dcdce1}
.dots{position:absolute;left:541.5px;top:24.5px;width:28px;height:28px;border-radius:50%;background:#1b1b1c}
#tl{position:absolute;left:1426px;top:52px;width:44px;height:693px;overflow:hidden;background:#000}
.slot{position:absolute;left:0;width:44px;height:44.33px;border-top:1px solid #29292b;text-align:center}
.slot b{display:block;font-weight:400;font-size:12.8px;letter-spacing:-.45px;line-height:14px;margin-top:13.8px;color:#ececf1;white-space:nowrap}
.slot b u{text-decoration:none;margin:0 -.9px}
.slot i{display:block;font-style:normal;font-size:9.4px;line-height:10px;margin-top:-.2px;color:#6c6c72;white-space:nowrap;letter-spacing:.2px}
#nav{position:absolute;left:0;top:745px;width:1465px;height:47px}
.nv{position:absolute;top:17px;line-height:16px;font-size:11px;font-weight:700;color:#dcdce1;white-space:nowrap}
#help{position:absolute;left:1368px;top:707.5px;width:44px;height:44px;border-radius:50%;background:#229d6d;text-align:center;font-size:25px;font-weight:700;line-height:44px;color:#fff}
.fl text{font-family:"Liberation Sans",sans-serif}
</style>
<div id="main"><div class="rpill">Dining Room</div><div class="dots"></div>
<svg class="abs" style="left:553.6px;top:31.8px" width="4" height="14" viewBox="0 0 4 14" ><g fill="#dcdce1"><circle cx="2" cy="1.7" r="1.55"/><circle cx="2" cy="6.9" r="1.55"/><circle cx="2" cy="12.1" r="1.55"/></g></svg>
<div id="room"></div></div>
<svg class="abs fl" style="left:0;top:0" width="1465" height="792" viewBox="0 0 1465 792"><rect x="525.2" y="172.8" width="4.4" height="41.6" fill="#c7c7cc"/><rect x="527.1" y="172.8" width=".7" height="41.6" fill="#a4a4a9"/><path d="M530 173.4H570.4A41 41 0 0 1 530 214" fill="none" stroke="#c7c7cc" stroke-width="1" stroke-dasharray="1.8 2.2"/><rect x="531.8" y="277.8" width="121.6" height="29.6" fill="#9a9a9e"/><rect x="551.67" y="277.8" width=".9" height="29.6" fill="#8a8a8f"/><rect x="571.94" y="277.8" width=".9" height="29.6" fill="#8a8a8f"/><rect x="592.21" y="277.8" width=".9" height="29.6" fill="#8a8a8f"/><rect x="612.48" y="277.8" width=".9" height="29.6" fill="#8a8a8f"/><rect x="632.75" y="277.8" width=".9" height="29.6" fill="#8a8a8f"/><rect x="530.8" y="382" width="179.20" height="7.60" fill="#4b4b4e"/><rect x="1139.1" y="193.6" width="7.40" height="178.60" fill="#4b4b4e"/><rect x="1138.9" y="492" width="7.90" height="179.20" fill="#4b4b4e"/><rect x="766.1" y="482.6" width="7.70" height="179.00" fill="#4b4b4e"/><rect x="1277" y="193.6" width="30" height="216.20" fill="#9a9a9e"/><rect x="1277" y="229.23" width="30" height=".9" fill="#8a8a8f"/><rect x="1277" y="265.27" width="30" height=".9" fill="#8a8a8f"/><rect x="1277" y="301.30" width="30" height=".9" fill="#8a8a8f"/><rect x="1277" y="337.33" width="30" height=".9" fill="#8a8a8f"/><rect x="1277" y="373.37" width="30" height=".9" fill="#8a8a8f"/><rect x="1277" y="463.6" width="30" height="216.90" fill="#9a9a9e"/><rect x="1277" y="499.35" width="30" height=".9" fill="#8a8a8f"/><rect x="1277" y="535.50" width="30" height=".9" fill="#8a8a8f"/><rect x="1277" y="571.65" width="30" height=".9" fill="#8a8a8f"/><rect x="1277" y="607.80" width="30" height=".9" fill="#8a8a8f"/><rect x="1277" y="643.95" width="30" height=".9" fill="#8a8a8f"/><rect x="762.6999999999999" y="217.70000000000002" width="21.60" height="8" rx="2.2" fill="#97979c"/><rect x="753.8" y="183.3" width="39.40" height="39.40" rx="2.2" fill="#c7c7cc"/><rect x="766.80" y="181.10" width="13.4" height="15.4" rx="3" fill="#dadade"/><text x="773.50" y="192.30" text-anchor="middle" font-size="10.6" fill="#141416" stroke="#141416" stroke-width=".3">1</text><rect x="809.3" y="217.70000000000002" width="21.60" height="8" rx="2.2" fill="#97979c"/><rect x="800.4" y="183.3" width="39.40" height="39.40" rx="2.2" fill="#c7c7cc"/><rect x="813.40" y="181.10" width="13.4" height="15.4" rx="3" fill="#dadade"/><text x="820.10" y="192.30" text-anchor="middle" font-size="10.6" fill="#141416" stroke="#141416" stroke-width=".3">2</text><rect x="762.6999999999999" y="292.2" width="21.60" height="8" rx="2.2" fill="#97979c"/><rect x="753.8" y="257.8" width="39.40" height="39.40" rx="2.2" fill="#c7c7cc"/><rect x="766.80" y="255.60" width="13.4" height="15.4" rx="3" fill="#dadade"/><text x="773.50" y="266.80" text-anchor="middle" font-size="10.6" fill="#141416" stroke="#141416" stroke-width=".3">4</text><rect x="809.3" y="292.2" width="21.60" height="8" rx="2.2" fill="#97979c"/><rect x="800.4" y="257.8" width="39.40" height="39.40" rx="2.2" fill="#c7c7cc"/><rect x="813.40" y="255.60" width="13.4" height="15.4" rx="3" fill="#dadade"/><text x="820.10" y="266.80" text-anchor="middle" font-size="10.6" fill="#141416" stroke="#141416" stroke-width=".3">6</text><rect x="924.80" y="180.30" width="21.4" height="12" rx="2.6" fill="#4e4e52" transform="rotate(180 935.5 206.9)"/><rect x="924.80" y="180.30" width="21.4" height="12" rx="2.6" fill="#4e4e52" transform="rotate(252 935.5 206.9)"/><rect x="924.80" y="180.30" width="21.4" height="12" rx="2.6" fill="#4e4e52" transform="rotate(324 935.5 206.9)"/><rect x="924.80" y="180.30" width="21.4" height="12" rx="2.6" fill="#4e4e52" transform="rotate(396 935.5 206.9)"/><rect x="924.80" y="180.30" width="21.4" height="12" rx="2.6" fill="#4e4e52" transform="rotate(108 935.5 206.9)"/><circle cx="935.5" cy="206.9" r="23" fill="#5d5d61"/><rect x="928.80" y="182.30" width="13.4" height="13.4" rx="3" fill="#69696d"/><text x="935.50" y="193.50" text-anchor="middle" font-size="10.6" fill="#1d1d1f" stroke="#1d1d1f" stroke-width=".3">3</text><rect x="916.20" y="204.40" width="38.6" height="14.2" rx="2.5" fill="#131314"/><text x="935.50" y="215.17" text-anchor="middle" font-size="10.2" letter-spacing="-.3" fill="#9a9a9f" stroke="#9a9a9f" stroke-width=".22">2:15P</text><rect x="1031.2" y="190.2" width="22.30" height="8" rx="2.2" fill="#c7c7cc"/><rect x="1060.6" y="190.2" width="22.00" height="8" rx="2.2" fill="#c7c7cc"/><rect x="1031.2" y="226.8" width="22.30" height="8" rx="2.2" fill="#c7c7cc"/><rect x="1060.6" y="226.8" width="22.00" height="8" rx="2.2" fill="#c7c7cc"/><rect x="1024.5" y="193.2" width="64.70" height="38.60" rx="2.2" fill="#78787c"/><rect x="1050.15" y="191.00" width="13.4" height="15.4" rx="3" fill="#c9c9ce"/><text x="1056.85" y="202.20" text-anchor="middle" font-size="10.6" fill="#141416" stroke="#141416" stroke-width=".3">5</text><rect x="1035.50" y="211.50" width="42.8" height="15.6" rx="2.5" fill="#000"/><text x="1056.90" y="223.19" text-anchor="middle" font-size="10.8" letter-spacing="-.3" fill="#fff" stroke="#fff" stroke-width=".22">12:30P</text><rect x="893.2" y="273.7" width="21.90" height="8" rx="2.2" fill="#616165"/><rect x="893.2" y="311.3" width="21.90" height="8" rx="2.2" fill="#616165"/><rect x="884" y="276.7" width="39.70" height="39.60" rx="2.2" fill="#454548"/><rect x="899" y="274.4" width="12.6" height="15" rx="2.2" fill="#a43b25"/><text x="905.3" y="286" text-anchor="middle" font-size="10.6" fill="#571b10" stroke="#571b10" stroke-width=".3">7</text><rect x="882.90" y="290.50" width="42" height="12.8" rx="1.5" fill="#111112"/><text x="903.90" y="300.72" text-anchor="middle" font-size="10.6" letter-spacing="-.3" fill="#8e8e93" stroke="#8e8e93" stroke-width=".22">11:45A</text><rect x="882.90" y="303.40" width="42" height="13" rx="1.5" fill="#111112"/><text x="903.90" y="313.72" text-anchor="middle" font-size="10.6" letter-spacing="-.3" fill="#8e8e93" stroke="#8e8e93" stroke-width=".22">3:15P</text><rect x="939.8" y="273.7" width="22.10" height="8" rx="2.2" fill="#97979c"/><rect x="939.8" y="310.4" width="22.10" height="8" rx="2.2" fill="#97979c"/><rect x="931.2" y="276.7" width="39.10" height="38.70" rx="2.2" fill="#c7c7cc"/><rect x="944.05" y="274.50" width="13.4" height="15.4" rx="3" fill="#dadade"/><text x="950.75" y="285.70" text-anchor="middle" font-size="10.6" fill="#141416" stroke="#141416" stroke-width=".3">8</text><rect x="1031.2" y="273.8" width="22.30" height="8" rx="2.2" fill="#97979c"/><rect x="1060.6" y="273.8" width="22.00" height="8" rx="2.2" fill="#97979c"/><rect x="1031.2" y="310.6" width="22.30" height="8" rx="2.2" fill="#97979c"/><rect x="1060.6" y="310.6" width="22.00" height="8" rx="2.2" fill="#97979c"/><rect x="1024.5" y="276.8" width="64.70" height="38.80" rx="2.2" fill="#c7c7cc"/><rect x="1050.15" y="274.60" width="13.4" height="15.4" rx="3" fill="#dadade"/><text x="1056.85" y="285.80" text-anchor="middle" font-size="10.6" fill="#141416" stroke="#141416" stroke-width=".3">9</text><rect x="843.8" y="459" width="8" height="17.90" rx="2.2" fill="#c7c7cc"/><rect x="843.8" y="480.9" width="8" height="18.40" rx="2.2" fill="#c7c7cc"/><rect x="843.8" y="503" width="8" height="18.50" rx="2.2" fill="#c7c7cc"/><rect x="884.8000000000001" y="459" width="8" height="17.90" rx="2.2" fill="#c7c7cc"/><rect x="884.8000000000001" y="480.9" width="8" height="18.40" rx="2.2" fill="#c7c7cc"/><rect x="884.8000000000001" y="503" width="8" height="18.50" rx="2.2" fill="#c7c7cc"/><rect x="847" y="454.2" width="42.60" height="72.10" rx="2.2" fill="#78787c"/><rect x="860.90" y="452.00" width="14.8" height="15.4" rx="3" fill="#c9c9ce"/><text x="868.30" y="463.20" text-anchor="middle" font-size="10.6" fill="#141416" stroke="#141416" stroke-width=".3">10</text><rect x="851.20" y="482.30" width="36.4" height="13.6" rx="2.5" fill="#f5c431"/><text x="869.40" y="492.77" text-anchor="middle" font-size="10.2" letter-spacing="-.3" fill="#2b2200" stroke="#2b2200" stroke-width=".22">9:15A</text><rect x="843.8" y="561" width="8" height="17.90" rx="2.2" fill="#97979c"/><rect x="843.8" y="582.9" width="8" height="18.40" rx="2.2" fill="#97979c"/><rect x="843.8" y="605" width="8" height="18.50" rx="2.2" fill="#97979c"/><rect x="884.8000000000001" y="561" width="8" height="17.90" rx="2.2" fill="#97979c"/><rect x="884.8000000000001" y="582.9" width="8" height="18.40" rx="2.2" fill="#97979c"/><rect x="884.8000000000001" y="605" width="8" height="18.50" rx="2.2" fill="#97979c"/><rect x="847" y="556.1" width="42.60" height="72.70" rx="2.2" fill="#c7c7cc"/><rect x="860.90" y="553.90" width="14.8" height="15.4" rx="3" fill="#dadade"/><text x="868.30" y="565.10" text-anchor="middle" font-size="10.6" fill="#141416" stroke="#141416" stroke-width=".3">11</text><rect x="960.40" y="422.60" width="21.4" height="12" rx="2.6" fill="#c7c7cc" transform="rotate(180 971.1 447.1)"/><rect x="960.40" y="422.60" width="21.4" height="12" rx="2.6" fill="#c7c7cc" transform="rotate(270 971.1 447.1)"/><rect x="960.40" y="422.60" width="21.4" height="12" rx="2.6" fill="#c7c7cc" transform="rotate(360 971.1 447.1)"/><rect x="960.40" y="422.60" width="21.4" height="12" rx="2.6" fill="#c7c7cc" transform="rotate(90 971.1 447.1)"/><circle cx="971.1" cy="447.1" r="20.5" fill="#78787c"/><rect x="964.20" y="424.00" width="13.8" height="13.4" rx="3" fill="#c9c9ce"/><text x="971.10" y="435.20" text-anchor="middle" font-size="10.6" fill="#141416" stroke="#141416" stroke-width=".3">12</text><rect x="953.10" y="444.70" width="36" height="14" rx="2.5" fill="#050505"/><text x="971.10" y="455.37" text-anchor="middle" font-size="10.2" textLength="24.4" lengthAdjust="spacingAndGlyphs" fill="#fff" stroke="#fff" stroke-width=".22">11:15A</text><rect x="960.40" y="497.00" width="21.4" height="12" rx="2.6" fill="#c7c7cc" transform="rotate(180 971.1 521.5)"/><rect x="960.40" y="497.00" width="21.4" height="12" rx="2.6" fill="#c7c7cc" transform="rotate(270 971.1 521.5)"/><rect x="960.40" y="497.00" width="21.4" height="12" rx="2.6" fill="#c7c7cc" transform="rotate(360 971.1 521.5)"/><rect x="960.40" y="497.00" width="21.4" height="12" rx="2.6" fill="#c7c7cc" transform="rotate(90 971.1 521.5)"/><circle cx="971.1" cy="521.5" r="20.5" fill="#78787c"/><rect x="964.20" y="498.40" width="13.8" height="13.4" rx="3" fill="#c9c9ce"/><text x="971.10" y="509.60" text-anchor="middle" font-size="10.6" fill="#141416" stroke="#141416" stroke-width=".3">13</text><rect x="953.10" y="519.30" width="36" height="14" rx="2.5" fill="#050505"/><text x="971.10" y="529.97" text-anchor="middle" font-size="10.2" textLength="30" lengthAdjust="spacingAndGlyphs" fill="#fff" stroke="#fff" stroke-width=".22">12:45P</text><rect x="960.40" y="571.40" width="21.4" height="12" rx="2.6" fill="#616165" transform="rotate(180 971.1 595.9)"/><rect x="960.40" y="571.40" width="21.4" height="12" rx="2.6" fill="#616165" transform="rotate(270 971.1 595.9)"/><rect x="960.40" y="571.40" width="21.4" height="12" rx="2.6" fill="#616165" transform="rotate(360 971.1 595.9)"/><rect x="960.40" y="571.40" width="21.4" height="12" rx="2.6" fill="#616165" transform="rotate(90 971.1 595.9)"/><circle cx="971.1" cy="595.9" r="20.5" fill="#454548"/><rect x="964.20" y="572.80" width="13.8" height="13.4" rx="3" fill="#646468"/><text x="971.10" y="584.00" text-anchor="middle" font-size="10.6" fill="#1d1d1f" stroke="#1d1d1f" stroke-width=".3">14</text><rect x="953.10" y="593.70" width="36" height="14" rx="2.5" fill="#151516"/><text x="971.10" y="604.37" text-anchor="middle" font-size="10.2" textLength="23.6" lengthAdjust="spacingAndGlyphs" fill="#8e8e93" stroke="#8e8e93" stroke-width=".22">3:30P</text><rect x="1049.2" y="490.5" width="8" height="21.80" rx="2.2" fill="#97979c"/><rect x="1086.5" y="490.5" width="8" height="21.80" rx="2.2" fill="#97979c"/><rect x="1052.4" y="481.8" width="38.90" height="39.20" rx="2.2" fill="#c7c7cc"/><rect x="1064.45" y="479.60" width="14.8" height="15.4" rx="3" fill="#dadade"/><text x="1071.85" y="490.80" text-anchor="middle" font-size="10.6" fill="#141416" stroke="#141416" stroke-width=".3">15</text><rect x="1049.2" y="537.3" width="8" height="21.80" rx="2.2" fill="#97979c"/><rect x="1086.5" y="537.3" width="8" height="21.80" rx="2.2" fill="#97979c"/><rect x="1052.4" y="528.8" width="38.90" height="38.80" rx="2.2" fill="#c7c7cc"/><rect x="1064.45" y="526.60" width="14.8" height="15.4" rx="3" fill="#dadade"/><text x="1071.85" y="537.80" text-anchor="middle" font-size="10.6" fill="#141416" stroke="#141416" stroke-width=".3">16</text><rect x="1049.2" y="583.8" width="8" height="21.80" rx="2.2" fill="#c7c7cc"/><rect x="1086.5" y="583.8" width="8" height="21.80" rx="2.2" fill="#c7c7cc"/><rect x="1052.4" y="575.3" width="38.90" height="38.60" rx="2.2" fill="#78787c"/><rect x="1064.45" y="573.10" width="14.8" height="15.4" rx="3" fill="#c9c9ce"/><text x="1071.85" y="584.30" text-anchor="middle" font-size="10.6" fill="#141416" stroke="#141416" stroke-width=".3">17</text><text x="1071.80" y="606.38" text-anchor="middle" font-size="11.6" letter-spacing="-.3" fill="#f2f2f7" stroke="#f2f2f7" stroke-width=".22">9:30A</text><rect x="508.2" y="487.2" width="8" height="18.20" rx="2.2" fill="#97979c"/><rect x="508.2" y="509.2" width="8" height="18.20" rx="2.2" fill="#97979c"/><rect x="508.2" y="531.2" width="8" height="18.40" rx="2.2" fill="#97979c"/><rect x="549.5" y="487.2" width="8" height="18.20" rx="2.2" fill="#97979c"/><rect x="549.5" y="509.2" width="8" height="18.20" rx="2.2" fill="#97979c"/><rect x="549.5" y="531.2" width="8" height="18.40" rx="2.2" fill="#97979c"/><rect x="511.4" y="481.9" width="42.90" height="72.70" rx="2.2" fill="#c7c7cc"/><rect x="525.45" y="479.70" width="14.8" height="15.4" rx="3" fill="#dadade"/><text x="532.85" y="490.90" text-anchor="middle" font-size="10.6" fill="#141416" stroke="#141416" stroke-width=".3">20</text><rect x="519" y="590.8" width="21.50" height="8" rx="2.2" fill="#97979c"/><rect x="548" y="590.8" width="21.50" height="8" rx="2.2" fill="#97979c"/><rect x="519" y="627.9" width="21.50" height="8" rx="2.2" fill="#97979c"/><rect x="548" y="627.9" width="21.50" height="8" rx="2.2" fill="#97979c"/><rect x="511.4" y="593.8" width="65.20" height="39.10" rx="2.2" fill="#c7c7cc"/><rect x="536.60" y="591.60" width="14.8" height="15.4" rx="3" fill="#dadade"/><text x="544.00" y="602.80" text-anchor="middle" font-size="10.6" fill="#141416" stroke="#141416" stroke-width=".3">21</text><rect x="617.40" y="515.40" width="21.4" height="12" rx="2.6" fill="#c7c7cc" transform="rotate(180 628.1 542)"/><rect x="617.40" y="515.40" width="21.4" height="12" rx="2.6" fill="#c7c7cc" transform="rotate(252 628.1 542)"/><rect x="617.40" y="515.40" width="21.4" height="12" rx="2.6" fill="#c7c7cc" transform="rotate(324 628.1 542)"/><rect x="617.40" y="515.40" width="21.4" height="12" rx="2.6" fill="#c7c7cc" transform="rotate(396 628.1 542)"/><rect x="617.40" y="515.40" width="21.4" height="12" rx="2.6" fill="#c7c7cc" transform="rotate(108 628.1 542)"/><circle cx="628.1" cy="542" r="23" fill="#78787c"/><rect x="621.20" y="517.40" width="13.8" height="13.4" rx="3" fill="#c9c9ce"/><text x="628.10" y="528.60" text-anchor="middle" font-size="10.6" fill="#141416" stroke="#141416" stroke-width=".3">22</text><text x="628.10" y="551.78" text-anchor="middle" font-size="11.6" letter-spacing="-.3" fill="#ececf1" stroke="#ececf1" stroke-width=".22">9:30A</text><rect x="704.0" y="528.4" width="8" height="20.40" rx="2.2" fill="#97979c"/><rect x="741.4000000000001" y="528.4" width="8" height="20.40" rx="2.2" fill="#97979c"/><rect x="707.2" y="519.1" width="39.00" height="39.00" rx="2.2" fill="#c7c7cc"/><rect x="718.70" y="516.90" width="16" height="15.4" rx="3" fill="#dadade"/><text x="726.70" y="528.10" text-anchor="middle" font-size="10.6" fill="#141416" stroke="#141416" stroke-width=".3">23</text><rect x="704.0" y="593.9" width="8" height="20.40" rx="2.2" fill="#97979c"/><rect x="741.4000000000001" y="593.9" width="8" height="20.40" rx="2.2" fill="#97979c"/><rect x="707.2" y="584.6" width="39.00" height="39.20" rx="2.2" fill="#c7c7cc"/><rect x="718.70" y="582.40" width="16" height="15.4" rx="3" fill="#dadade"/><text x="726.70" y="593.60" text-anchor="middle" font-size="10.6" fill="#141416" stroke="#141416" stroke-width=".3">24</text><rect x="1225.8000000000002" y="201.8" width="9" height="17" rx="2.4" fill="#97979c"/><circle cx="1247.4" cy="210.3" r="17.8" fill="#c7c7cc"/><rect x="1240.10" y="190.90" width="14.6" height="13.4" rx="3" fill="#dadade"/><text x="1247.40" y="202.10" text-anchor="middle" font-size="10.6" fill="#141416" stroke="#141416" stroke-width=".3">40</text><rect x="1225.8000000000002" y="248.2" width="9" height="17" rx="2.4" fill="#97979c"/><circle cx="1247.4" cy="256.7" r="17.8" fill="#c7c7cc"/><rect x="1240.10" y="237.30" width="14.6" height="13.4" rx="3" fill="#dadade"/><text x="1247.40" y="248.50" text-anchor="middle" font-size="10.6" fill="#141416" stroke="#141416" stroke-width=".3">41</text><rect x="1225.8000000000002" y="294.8" width="9" height="17" rx="2.4" fill="#97979c"/><circle cx="1247.4" cy="303.3" r="17.8" fill="#c7c7cc"/><rect x="1240.10" y="283.90" width="14.6" height="13.4" rx="3" fill="#dadade"/><text x="1247.40" y="295.10" text-anchor="middle" font-size="10.6" fill="#141416" stroke="#141416" stroke-width=".3">42</text><rect x="1225.8000000000002" y="341.8" width="9" height="17" rx="2.4" fill="#97979c"/><circle cx="1247.4" cy="350.3" r="17.8" fill="#c7c7cc"/><rect x="1240.10" y="330.90" width="14.6" height="13.4" rx="3" fill="#dadade"/><text x="1247.40" y="342.10" text-anchor="middle" font-size="10.6" fill="#141416" stroke="#141416" stroke-width=".3">43</text><rect x="1225.8000000000002" y="388.2" width="9" height="17" rx="2.4" fill="#97979c"/><circle cx="1247.4" cy="396.7" r="17.8" fill="#c7c7cc"/><rect x="1240.10" y="377.30" width="14.6" height="13.4" rx="3" fill="#dadade"/><text x="1247.40" y="388.50" text-anchor="middle" font-size="10.6" fill="#141416" stroke="#141416" stroke-width=".3">44</text><rect x="1225.8000000000002" y="472.6" width="9" height="17" rx="2.4" fill="#97979c"/><circle cx="1247.4" cy="481.1" r="17.8" fill="#c7c7cc"/><rect x="1240.10" y="461.70" width="14.6" height="13.4" rx="3" fill="#dadade"/><text x="1247.40" y="472.90" text-anchor="middle" font-size="10.6" fill="#141416" stroke="#141416" stroke-width=".3">45</text><rect x="1225.8000000000002" y="518.9" width="9" height="17" rx="2.4" fill="#97979c"/><circle cx="1247.4" cy="527.4" r="17.8" fill="#c7c7cc"/><rect x="1240.10" y="508.00" width="14.6" height="13.4" rx="3" fill="#dadade"/><text x="1247.40" y="519.20" text-anchor="middle" font-size="10.6" fill="#141416" stroke="#141416" stroke-width=".3">46</text><rect x="1225.8000000000002" y="565.6" width="9" height="17" rx="2.4" fill="#97979c"/><circle cx="1247.4" cy="574.1" r="17.8" fill="#c7c7cc"/><rect x="1240.10" y="554.70" width="14.6" height="13.4" rx="3" fill="#dadade"/><text x="1247.40" y="565.90" text-anchor="middle" font-size="10.6" fill="#141416" stroke="#141416" stroke-width=".3">47</text><rect x="1225.8000000000002" y="612.0" width="9" height="17" rx="2.4" fill="#97979c"/><circle cx="1247.4" cy="620.5" r="17.8" fill="#c7c7cc"/><rect x="1240.10" y="601.10" width="14.6" height="13.4" rx="3" fill="#dadade"/><text x="1247.40" y="612.30" text-anchor="middle" font-size="10.6" fill="#141416" stroke="#141416" stroke-width=".3">48</text><rect x="1225.8000000000002" y="658.7" width="9" height="17" rx="2.4" fill="#97979c"/><circle cx="1247.4" cy="667.2" r="17.8" fill="#c7c7cc"/><rect x="1240.10" y="647.80" width="14.6" height="13.4" rx="3" fill="#dadade"/><text x="1247.40" y="659.00" text-anchor="middle" font-size="10.6" fill="#141416" stroke="#141416" stroke-width=".3">49</text><g transform="translate(575 424.3) scale(.95)" stroke="#0b2506" stroke-width="1" stroke-linejoin="round"><path d="M-2.8 -5.6L3.08 -5.319999999999999L5.6 -0.5599999999999999L3.472 4.76L-0.5599999999999999 5.88L-4.76 3.36L-5.6 -1.68Z" fill="#4a951c" transform="translate(5.2 -18.0) rotate(20)"/><path d="M0 5.04L0 -2.8" stroke="#1d4a0c" stroke-width=".7" transform="translate(5.2 -18.0) rotate(20)"/><path d="M-3.0 -6L3.3000000000000003 -5.699999999999999L6 -0.6000000000000001L3.7199999999999998 5.1L-0.6000000000000001 6.300000000000001L-5.1 3.5999999999999996L-6 -1.7999999999999998Z" fill="#58a822" transform="translate(-3 -13.5) rotate(-10)"/><path d="M0 5.4L0 -3.0" stroke="#1d4a0c" stroke-width=".7" transform="translate(-3 -13.5) rotate(-10)"/><path d="M-2.6 -5.2L2.8600000000000003 -4.9399999999999995L5.2 -0.52L3.224 4.42L-0.52 5.460000000000001L-4.42 3.12L-5.2 -1.56Z" fill="#3a7a16" transform="translate(-13.6 -12.2) rotate(-45)"/><path d="M0 4.680000000000001L0 -2.6" stroke="#1d4a0c" stroke-width=".7" transform="translate(-13.6 -12.2) rotate(-45)"/><path d="M-2.4 -4.8L2.64 -4.56L4.8 -0.48L2.976 4.08L-0.48 5.04L-4.08 2.88L-4.8 -1.44Z" fill="#2f6812" transform="translate(-19.4 -6.8) rotate(-70)"/><path d="M0 4.32L0 -2.4" stroke="#1d4a0c" stroke-width=".7" transform="translate(-19.4 -6.8) rotate(-70)"/><path d="M-3.0 -6L3.3000000000000003 -5.699999999999999L6 -0.6000000000000001L3.7199999999999998 5.1L-0.6000000000000001 6.300000000000001L-5.1 3.5999999999999996L-6 -1.7999999999999998Z" fill="#58a822" transform="translate(-12.6 -1) rotate(-85)"/><path d="M0 5.4L0 -3.0" stroke="#1d4a0c" stroke-width=".7" transform="translate(-12.6 -1) rotate(-85)"/><path d="M-2.7 -5.4L2.9700000000000006 -5.13L5.4 -0.54L3.3480000000000003 4.59L-0.54 5.670000000000001L-4.59 3.24L-5.4 -1.62Z" fill="#2f6812" transform="translate(-17.4 11.2) rotate(-125)"/><path d="M0 4.86L0 -2.7" stroke="#1d4a0c" stroke-width=".7" transform="translate(-17.4 11.2) rotate(-125)"/><path d="M-2.5 -5L2.75 -4.75L5 -0.5L3.1 4.25L-0.5 5.25L-4.25 3.0L-5 -1.5Z" fill="#3a7a16" transform="translate(-9.2 13.8) rotate(-150)"/><path d="M0 4.5L0 -2.5" stroke="#1d4a0c" stroke-width=".7" transform="translate(-9.2 13.8) rotate(-150)"/><path d="M-3.0 -6L3.3000000000000003 -5.699999999999999L6 -0.6000000000000001L3.7199999999999998 5.1L-0.6000000000000001 6.300000000000001L-5.1 3.5999999999999996L-6 -1.7999999999999998Z" fill="#58a822" transform="translate(0.6 12) rotate(175)"/><path d="M0 5.4L0 -3.0" stroke="#1d4a0c" stroke-width=".7" transform="translate(0.6 12) rotate(175)"/><path d="M-2.7 -5.4L2.9700000000000006 -5.13L5.4 -0.54L3.3480000000000003 4.59L-0.54 5.670000000000001L-4.59 3.24L-5.4 -1.62Z" fill="#2f6812" transform="translate(11.4 15) rotate(140)"/><path d="M0 4.86L0 -2.7" stroke="#1d4a0c" stroke-width=".7" transform="translate(11.4 15) rotate(140)"/><path d="M-2.8 -5.6L3.08 -5.319999999999999L5.6 -0.5599999999999999L3.472 4.76L-0.5599999999999999 5.88L-4.76 3.36L-5.6 -1.68Z" fill="#4a951c" transform="translate(13 6.4) rotate(115)"/><path d="M0 5.04L0 -2.8" stroke="#1d4a0c" stroke-width=".7" transform="translate(13 6.4) rotate(115)"/><path d="M-2.6 -5.2L2.8600000000000003 -4.9399999999999995L5.2 -0.52L3.224 4.42L-0.52 5.460000000000001L-4.42 3.12L-5.2 -1.56Z" fill="#3a7a16" transform="translate(17.6 -0.6) rotate(88)"/><path d="M0 4.680000000000001L0 -2.6" stroke="#1d4a0c" stroke-width=".7" transform="translate(17.6 -0.6) rotate(88)"/><path d="M-3.0 -6L3.3000000000000003 -5.699999999999999L6 -0.6000000000000001L3.7199999999999998 5.1L-0.6000000000000001 6.300000000000001L-5.1 3.5999999999999996L-6 -1.7999999999999998Z" fill="#58a822" transform="translate(11.6 -7) rotate(55)"/><path d="M0 5.4L0 -3.0" stroke="#1d4a0c" stroke-width=".7" transform="translate(11.6 -7) rotate(55)"/><path d="M-2.3 -4.6L2.53 -4.369999999999999L4.6 -0.45999999999999996L2.852 3.9099999999999997L-0.45999999999999996 4.83L-3.9099999999999997 2.76L-4.6 -1.38Z" fill="#4a951c" transform="translate(-7 -7.5) rotate(-40)"/><path d="M0 4.14L0 -2.3" stroke="#1d4a0c" stroke-width=".7" transform="translate(-7 -7.5) rotate(-40)"/><path d="M-2.2 -4.4L2.4200000000000004 -4.18L4.4 -0.44000000000000006L2.728 3.74L-0.44000000000000006 4.620000000000001L-3.74 2.64L-4.4 -1.32Z" fill="#3a7a16" transform="translate(6 -10.5) rotate(25)"/><path d="M0 3.9600000000000004L0 -2.2" stroke="#1d4a0c" stroke-width=".7" transform="translate(6 -10.5) rotate(25)"/><path d="M-2.3 -4.6L2.53 -4.369999999999999L4.6 -0.45999999999999996L2.852 3.9099999999999997L-0.45999999999999996 4.83L-3.9099999999999997 2.76L-4.6 -1.38Z" fill="#4a951c" transform="translate(-6.5 6.5) rotate(-135)"/><path d="M0 4.14L0 -2.3" stroke="#1d4a0c" stroke-width=".7" transform="translate(-6.5 6.5) rotate(-135)"/><path d="M-2.2 -4.4L2.4200000000000004 -4.18L4.4 -0.44000000000000006L2.728 3.74L-0.44000000000000006 4.620000000000001L-3.74 2.64L-4.4 -1.32Z" fill="#4a951c" transform="translate(7 4) rotate(120)"/><path d="M0 3.9600000000000004L0 -2.2" stroke="#1d4a0c" stroke-width=".7" transform="translate(7 4) rotate(120)"/><circle r="4.4" fill="#102b08" stroke="none"/><path d="M0 0L5.1 1.8" stroke="#a9b8a4" stroke-width=".7"/><path d="M0 0L1.4 5.2" stroke="#a9b8a4" stroke-width=".7"/><path d="M0 0L-3.5 4.1" stroke="#a9b8a4" stroke-width=".7"/><path d="M0 0L-5.3 -0.9" stroke="#a9b8a4" stroke-width=".7"/><path d="M0 0L-1.8 -5.1" stroke="#a9b8a4" stroke-width=".7"/><path d="M0 0L3.5 -4.1" stroke="#a9b8a4" stroke-width=".7"/><circle r="1.5" fill="#c3dc3c" stroke="none"/><rect x="-13.6" y="-6" width="1" height="1.600" fill="#45c39a" stroke="none"/><rect x="6.4" y="-3.6" width="1" height="1.600" fill="#45c39a" stroke="none"/><rect x="0.6" y="6.6" width="1" height="1.600" fill="#45c39a" stroke="none"/><rect x="0.4" y="10" width="1" height="1.600" fill="#45c39a" stroke="none"/></g><g transform="translate(631 424.3) scale(.95)" stroke="#0b2506" stroke-width="1" stroke-linejoin="round"><path d="M-2.8 -5.6L3.08 -5.319999999999999L5.6 -0.5599999999999999L3.472 4.76L-0.5599999999999999 5.88L-4.76 3.36L-5.6 -1.68Z" fill="#4a951c" transform="translate(5.2 -18.0) rotate(20)"/><path d="M0 5.04L0 -2.8" stroke="#1d4a0c" stroke-width=".7" transform="translate(5.2 -18.0) rotate(20)"/><path d="M-3.0 -6L3.3000000000000003 -5.699999999999999L6 -0.6000000000000001L3.7199999999999998 5.1L-0.6000000000000001 6.300000000000001L-5.1 3.5999999999999996L-6 -1.7999999999999998Z" fill="#58a822" transform="translate(-3 -13.5) rotate(-10)"/><path d="M0 5.4L0 -3.0" stroke="#1d4a0c" stroke-width=".7" transform="translate(-3 -13.5) rotate(-10)"/><path d="M-2.6 -5.2L2.8600000000000003 -4.9399999999999995L5.2 -0.52L3.224 4.42L-0.52 5.460000000000001L-4.42 3.12L-5.2 -1.56Z" fill="#3a7a16" transform="translate(-13.6 -12.2) rotate(-45)"/><path d="M0 4.680000000000001L0 -2.6" stroke="#1d4a0c" stroke-width=".7" transform="translate(-13.6 -12.2) rotate(-45)"/><path d="M-2.4 -4.8L2.64 -4.56L4.8 -0.48L2.976 4.08L-0.48 5.04L-4.08 2.88L-4.8 -1.44Z" fill="#2f6812" transform="translate(-19.4 -6.8) rotate(-70)"/><path d="M0 4.32L0 -2.4" stroke="#1d4a0c" stroke-width=".7" transform="translate(-19.4 -6.8) rotate(-70)"/><path d="M-3.0 -6L3.3000000000000003 -5.699999999999999L6 -0.6000000000000001L3.7199999999999998 5.1L-0.6000000000000001 6.300000000000001L-5.1 3.5999999999999996L-6 -1.7999999999999998Z" fill="#58a822" transform="translate(-12.6 -1) rotate(-85)"/><path d="M0 5.4L0 -3.0" stroke="#1d4a0c" stroke-width=".7" transform="translate(-12.6 -1) rotate(-85)"/><path d="M-2.7 -5.4L2.9700000000000006 -5.13L5.4 -0.54L3.3480000000000003 4.59L-0.54 5.670000000000001L-4.59 3.24L-5.4 -1.62Z" fill="#2f6812" transform="translate(-17.4 11.2) rotate(-125)"/><path d="M0 4.86L0 -2.7" stroke="#1d4a0c" stroke-width=".7" transform="translate(-17.4 11.2) rotate(-125)"/><path d="M-2.5 -5L2.75 -4.75L5 -0.5L3.1 4.25L-0.5 5.25L-4.25 3.0L-5 -1.5Z" fill="#3a7a16" transform="translate(-9.2 13.8) rotate(-150)"/><path d="M0 4.5L0 -2.5" stroke="#1d4a0c" stroke-width=".7" transform="translate(-9.2 13.8) rotate(-150)"/><path d="M-3.0 -6L3.3000000000000003 -5.699999999999999L6 -0.6000000000000001L3.7199999999999998 5.1L-0.6000000000000001 6.300000000000001L-5.1 3.5999999999999996L-6 -1.7999999999999998Z" fill="#58a822" transform="translate(0.6 12) rotate(175)"/><path d="M0 5.4L0 -3.0" stroke="#1d4a0c" stroke-width=".7" transform="translate(0.6 12) rotate(175)"/><path d="M-2.7 -5.4L2.9700000000000006 -5.13L5.4 -0.54L3.3480000000000003 4.59L-0.54 5.670000000000001L-4.59 3.24L-5.4 -1.62Z" fill="#2f6812" transform="translate(11.4 15) rotate(140)"/><path d="M0 4.86L0 -2.7" stroke="#1d4a0c" stroke-width=".7" transform="translate(11.4 15) rotate(140)"/><path d="M-2.8 -5.6L3.08 -5.319999999999999L5.6 -0.5599999999999999L3.472 4.76L-0.5599999999999999 5.88L-4.76 3.36L-5.6 -1.68Z" fill="#4a951c" transform="translate(13 6.4) rotate(115)"/><path d="M0 5.04L0 -2.8" stroke="#1d4a0c" stroke-width=".7" transform="translate(13 6.4) rotate(115)"/><path d="M-2.6 -5.2L2.8600000000000003 -4.9399999999999995L5.2 -0.52L3.224 4.42L-0.52 5.460000000000001L-4.42 3.12L-5.2 -1.56Z" fill="#3a7a16" transform="translate(17.6 -0.6) rotate(88)"/><path d="M0 4.680000000000001L0 -2.6" stroke="#1d4a0c" stroke-width=".7" transform="translate(17.6 -0.6) rotate(88)"/><path d="M-3.0 -6L3.3000000000000003 -5.699999999999999L6 -0.6000000000000001L3.7199999999999998 5.1L-0.6000000000000001 6.300000000000001L-5.1 3.5999999999999996L-6 -1.7999999999999998Z" fill="#58a822" transform="translate(11.6 -7) rotate(55)"/><path d="M0 5.4L0 -3.0" stroke="#1d4a0c" stroke-width=".7" transform="translate(11.6 -7) rotate(55)"/><path d="M-2.3 -4.6L2.53 -4.369999999999999L4.6 -0.45999999999999996L2.852 3.9099999999999997L-0.45999999999999996 4.83L-3.9099999999999997 2.76L-4.6 -1.38Z" fill="#4a951c" transform="translate(-7 -7.5) rotate(-40)"/><path d="M0 4.14L0 -2.3" stroke="#1d4a0c" stroke-width=".7" transform="translate(-7 -7.5) rotate(-40)"/><path d="M-2.2 -4.4L2.4200000000000004 -4.18L4.4 -0.44000000000000006L2.728 3.74L-0.44000000000000006 4.620000000000001L-3.74 2.64L-4.4 -1.32Z" fill="#3a7a16" transform="translate(6 -10.5) rotate(25)"/><path d="M0 3.9600000000000004L0 -2.2" stroke="#1d4a0c" stroke-width=".7" transform="translate(6 -10.5) rotate(25)"/><path d="M-2.3 -4.6L2.53 -4.369999999999999L4.6 -0.45999999999999996L2.852 3.9099999999999997L-0.45999999999999996 4.83L-3.9099999999999997 2.76L-4.6 -1.38Z" fill="#4a951c" transform="translate(-6.5 6.5) rotate(-135)"/><path d="M0 4.14L0 -2.3" stroke="#1d4a0c" stroke-width=".7" transform="translate(-6.5 6.5) rotate(-135)"/><path d="M-2.2 -4.4L2.4200000000000004 -4.18L4.4 -0.44000000000000006L2.728 3.74L-0.44000000000000006 4.620000000000001L-3.74 2.64L-4.4 -1.32Z" fill="#4a951c" transform="translate(7 4) rotate(120)"/><path d="M0 3.9600000000000004L0 -2.2" stroke="#1d4a0c" stroke-width=".7" transform="translate(7 4) rotate(120)"/><circle r="4.4" fill="#102b08" stroke="none"/><path d="M0 0L5.1 1.8" stroke="#a9b8a4" stroke-width=".7"/><path d="M0 0L1.4 5.2" stroke="#a9b8a4" stroke-width=".7"/><path d="M0 0L-3.5 4.1" stroke="#a9b8a4" stroke-width=".7"/><path d="M0 0L-5.3 -0.9" stroke="#a9b8a4" stroke-width=".7"/><path d="M0 0L-1.8 -5.1" stroke="#a9b8a4" stroke-width=".7"/><path d="M0 0L3.5 -4.1" stroke="#a9b8a4" stroke-width=".7"/><circle r="1.5" fill="#c3dc3c" stroke="none"/><rect x="-13.6" y="-6" width="1" height="1.600" fill="#45c39a" stroke="none"/><rect x="6.4" y="-3.6" width="1" height="1.600" fill="#45c39a" stroke="none"/><rect x="0.6" y="6.6" width="1" height="1.600" fill="#45c39a" stroke="none"/><rect x="0.4" y="10" width="1" height="1.600" fill="#45c39a" stroke="none"/></g><g transform="translate(687 424.3) scale(.95)" stroke="#0b2506" stroke-width="1" stroke-linejoin="round"><path d="M-2.8 -5.6L3.08 -5.319999999999999L5.6 -0.5599999999999999L3.472 4.76L-0.5599999999999999 5.88L-4.76 3.36L-5.6 -1.68Z" fill="#4a951c" transform="translate(5.2 -18.0) rotate(20)"/><path d="M0 5.04L0 -2.8" stroke="#1d4a0c" stroke-width=".7" transform="translate(5.2 -18.0) rotate(20)"/><path d="M-3.0 -6L3.3000000000000003 -5.699999999999999L6 -0.6000000000000001L3.7199999999999998 5.1L-0.6000000000000001 6.300000000000001L-5.1 3.5999999999999996L-6 -1.7999999999999998Z" fill="#58a822" transform="translate(-3 -13.5) rotate(-10)"/><path d="M0 5.4L0 -3.0" stroke="#1d4a0c" stroke-width=".7" transform="translate(-3 -13.5) rotate(-10)"/><path d="M-2.6 -5.2L2.8600000000000003 -4.9399999999999995L5.2 -0.52L3.224 4.42L-0.52 5.460000000000001L-4.42 3.12L-5.2 -1.56Z" fill="#3a7a16" transform="translate(-13.6 -12.2) rotate(-45)"/><path d="M0 4.680000000000001L0 -2.6" stroke="#1d4a0c" stroke-width=".7" transform="translate(-13.6 -12.2) rotate(-45)"/><path d="M-2.4 -4.8L2.64 -4.56L4.8 -0.48L2.976 4.08L-0.48 5.04L-4.08 2.88L-4.8 -1.44Z" fill="#2f6812" transform="translate(-19.4 -6.8) rotate(-70)"/><path d="M0 4.32L0 -2.4" stroke="#1d4a0c" stroke-width=".7" transform="translate(-19.4 -6.8) rotate(-70)"/><path d="M-3.0 -6L3.3000000000000003 -5.699999999999999L6 -0.6000000000000001L3.7199999999999998 5.1L-0.6000000000000001 6.300000000000001L-5.1 3.5999999999999996L-6 -1.7999999999999998Z" fill="#58a822" transform="translate(-12.6 -1) rotate(-85)"/><path d="M0 5.4L0 -3.0" stroke="#1d4a0c" stroke-width=".7" transform="translate(-12.6 -1) rotate(-85)"/><path d="M-2.7 -5.4L2.9700000000000006 -5.13L5.4 -0.54L3.3480000000000003 4.59L-0.54 5.670000000000001L-4.59 3.24L-5.4 -1.62Z" fill="#2f6812" transform="translate(-17.4 11.2) rotate(-125)"/><path d="M0 4.86L0 -2.7" stroke="#1d4a0c" stroke-width=".7" transform="translate(-17.4 11.2) rotate(-125)"/><path d="M-2.5 -5L2.75 -4.75L5 -0.5L3.1 4.25L-0.5 5.25L-4.25 3.0L-5 -1.5Z" fill="#3a7a16" transform="translate(-9.2 13.8) rotate(-150)"/><path d="M0 4.5L0 -2.5" stroke="#1d4a0c" stroke-width=".7" transform="translate(-9.2 13.8) rotate(-150)"/><path d="M-3.0 -6L3.3000000000000003 -5.699999999999999L6 -0.6000000000000001L3.7199999999999998 5.1L-0.6000000000000001 6.300000000000001L-5.1 3.5999999999999996L-6 -1.7999999999999998Z" fill="#58a822" transform="translate(0.6 12) rotate(175)"/><path d="M0 5.4L0 -3.0" stroke="#1d4a0c" stroke-width=".7" transform="translate(0.6 12) rotate(175)"/><path d="M-2.7 -5.4L2.9700000000000006 -5.13L5.4 -0.54L3.3480000000000003 4.59L-0.54 5.670000000000001L-4.59 3.24L-5.4 -1.62Z" fill="#2f6812" transform="translate(11.4 15) rotate(140)"/><path d="M0 4.86L0 -2.7" stroke="#1d4a0c" stroke-width=".7" transform="translate(11.4 15) rotate(140)"/><path d="M-2.8 -5.6L3.08 -5.319999999999999L5.6 -0.5599999999999999L3.472 4.76L-0.5599999999999999 5.88L-4.76 3.36L-5.6 -1.68Z" fill="#4a951c" transform="translate(13 6.4) rotate(115)"/><path d="M0 5.04L0 -2.8" stroke="#1d4a0c" stroke-width=".7" transform="translate(13 6.4) rotate(115)"/><path d="M-2.6 -5.2L2.8600000000000003 -4.9399999999999995L5.2 -0.52L3.224 4.42L-0.52 5.460000000000001L-4.42 3.12L-5.2 -1.56Z" fill="#3a7a16" transform="translate(17.6 -0.6) rotate(88)"/><path d="M0 4.680000000000001L0 -2.6" stroke="#1d4a0c" stroke-width=".7" transform="translate(17.6 -0.6) rotate(88)"/><path d="M-3.0 -6L3.3000000000000003 -5.699999999999999L6 -0.6000000000000001L3.7199999999999998 5.1L-0.6000000000000001 6.300000000000001L-5.1 3.5999999999999996L-6 -1.7999999999999998Z" fill="#58a822" transform="translate(11.6 -7) rotate(55)"/><path d="M0 5.4L0 -3.0" stroke="#1d4a0c" stroke-width=".7" transform="translate(11.6 -7) rotate(55)"/><path d="M-2.3 -4.6L2.53 -4.369999999999999L4.6 -0.45999999999999996L2.852 3.9099999999999997L-0.45999999999999996 4.83L-3.9099999999999997 2.76L-4.6 -1.38Z" fill="#4a951c" transform="translate(-7 -7.5) rotate(-40)"/><path d="M0 4.14L0 -2.3" stroke="#1d4a0c" stroke-width=".7" transform="translate(-7 -7.5) rotate(-40)"/><path d="M-2.2 -4.4L2.4200000000000004 -4.18L4.4 -0.44000000000000006L2.728 3.74L-0.44000000000000006 4.620000000000001L-3.74 2.64L-4.4 -1.32Z" fill="#3a7a16" transform="translate(6 -10.5) rotate(25)"/><path d="M0 3.9600000000000004L0 -2.2" stroke="#1d4a0c" stroke-width=".7" transform="translate(6 -10.5) rotate(25)"/><path d="M-2.3 -4.6L2.53 -4.369999999999999L4.6 -0.45999999999999996L2.852 3.9099999999999997L-0.45999999999999996 4.83L-3.9099999999999997 2.76L-4.6 -1.38Z" fill="#4a951c" transform="translate(-6.5 6.5) rotate(-135)"/><path d="M0 4.14L0 -2.3" stroke="#1d4a0c" stroke-width=".7" transform="translate(-6.5 6.5) rotate(-135)"/><path d="M-2.2 -4.4L2.4200000000000004 -4.18L4.4 -0.44000000000000006L2.728 3.74L-0.44000000000000006 4.620000000000001L-3.74 2.64L-4.4 -1.32Z" fill="#4a951c" transform="translate(7 4) rotate(120)"/><path d="M0 3.9600000000000004L0 -2.2" stroke="#1d4a0c" stroke-width=".7" transform="translate(7 4) rotate(120)"/><circle r="4.4" fill="#102b08" stroke="none"/><path d="M0 0L5.1 1.8" stroke="#a9b8a4" stroke-width=".7"/><path d="M0 0L1.4 5.2" stroke="#a9b8a4" stroke-width=".7"/><path d="M0 0L-3.5 4.1" stroke="#a9b8a4" stroke-width=".7"/><path d="M0 0L-5.3 -0.9" stroke="#a9b8a4" stroke-width=".7"/><path d="M0 0L-1.8 -5.1" stroke="#a9b8a4" stroke-width=".7"/><path d="M0 0L3.5 -4.1" stroke="#a9b8a4" stroke-width=".7"/><circle r="1.5" fill="#c3dc3c" stroke="none"/><rect x="-13.6" y="-6" width="1" height="1.600" fill="#45c39a" stroke="none"/><rect x="6.4" y="-3.6" width="1" height="1.600" fill="#45c39a" stroke="none"/><rect x="0.6" y="6.6" width="1" height="1.600" fill="#45c39a" stroke="none"/><rect x="0.4" y="10" width="1" height="1.600" fill="#45c39a" stroke="none"/></g><g transform="translate(1104.8 367.1)"><polygon points="0.00,22.00 -19.05,11.00 -19.05,-11.00 -0.00,-22.00 19.05,-11.00 19.05,11.00" fill="#b4b4b9"/><polygon points="0.00,20.70 -17.93,10.35 -17.93,-10.35 -0.00,-20.70 17.93,-10.35 17.93,10.35" fill="#77777c"/><polygon points="0.00,19.80 -17.15,9.90 -17.15,-9.90 -0.00,-19.80 17.15,-9.90 17.15,9.90" fill="#adadb2"/><polygon points="0.00,18.60 -16.11,9.30 -16.11,-9.30 -0.00,-18.60 16.11,-9.30 16.11,9.30" fill="#4a3226"/><circle r="14.6" fill="#6d9f24" stroke="#56851b" stroke-width="1.6" stroke-dasharray="2.2 1.3"/><circle r="13.6" fill="#7dae2b"/><circle cx="-.6" cy=".4" r="11.6" fill="#8cbb30"/><path d="M-7 -4.500Q-4 -8.500 .5 -7Q4 -2.500 7 3.500Q7 8 1.500 9.500Q-3.500 10.500 -7 7.500Q-9 2.500 -7 -4.500Z" fill="#a0c93b"/><path d="M3 -9.500Q8.500 -6.500 10.500 1" fill="none" stroke="#79aa29" stroke-width="1.6"/><circle cx="-10.0" cy="14.3" r="1" fill="#c9d84a"/><circle cx="-8.8" cy="-15.2" r="1" fill="#d9dfc8"/><circle cx="9.6" cy="-13.8" r="1" fill="#b7c93e"/><circle cx="8.6" cy="14.9" r="1" fill="#c9d84a"/><circle cx="-16.5" cy="-1.4" r="1" fill="#8a5a3a"/><circle cx="16.3" cy="1.4" r="1" fill="#8a5a3a"/></g><g transform="translate(648.6 619.4)"><polygon points="22.40,0.00 11.20,19.40 -11.20,19.40 -22.40,0.00 -11.20,-19.40 11.20,-19.40" fill="#b4b4b9"/><polygon points="21.10,0.00 10.55,18.27 -10.55,18.27 -21.10,0.00 -10.55,-18.27 10.55,-18.27" fill="#77777c"/><polygon points="20.20,0.00 10.10,17.49 -10.10,17.49 -20.20,0.00 -10.10,-17.49 10.10,-17.49" fill="#adadb2"/><polygon points="19.00,0.00 9.50,16.45 -9.50,16.45 -19.00,0.00 -9.50,-16.45 9.50,-16.45" fill="#4a3226"/><circle r="14.6" fill="#6d9f24" stroke="#56851b" stroke-width="1.6" stroke-dasharray="2.2 1.3"/><circle r="13.6" fill="#7dae2b"/><circle cx="-.6" cy=".4" r="11.6" fill="#8cbb30"/><path d="M-7 -4.500Q-4 -8.500 .5 -7Q4 -2.500 7 3.500Q7 8 1.500 9.500Q-3.500 10.500 -7 7.500Q-9 2.500 -7 -4.500Z" fill="#a0c93b"/><path d="M3 -9.500Q8.500 -6.500 10.500 1" fill="none" stroke="#79aa29" stroke-width="1.6"/><circle cx="14.3" cy="10.0" r="1" fill="#c9d84a"/><circle cx="-15.2" cy="8.8" r="1" fill="#d9dfc8"/><circle cx="-13.8" cy="-9.6" r="1" fill="#b7c93e"/><circle cx="14.9" cy="-8.6" r="1" fill="#c9d84a"/><circle cx="-1.4" cy="16.5" r="1" fill="#8a5a3a"/><circle cx="1.4" cy="-16.3" r="1" fill="#8a5a3a"/></g><g stroke="#000" stroke-width="1.6"><rect x="910.9" y="42.9" width="4.2" height="16.2" rx="2.1" fill="#000"/><rect x="904.9" y="48.9" width="16.2" height="4.2" rx="2.1" fill="#000"/></g><rect x="910.9" y="42.9" width="4.2" height="16.2" rx="2.1" fill="#f6f6f6"/><rect x="904.9" y="48.9" width="16.2" height="4.2" rx="2.1" fill="#f6f6f6"/><rect x="912" y="45" width="2" height="12" fill="#9a9a9a"/><rect x="907" y="50" width="12" height="2" fill="#8c8c8c"/><circle cx="911.4" cy="49.4" r=".8" fill="#fff"/><circle cx="914.6" cy="49.4" r=".8" fill="#fff"/><circle cx="911.4" cy="52.6" r=".8" fill="#fff"/><circle cx="914.6" cy="52.6" r=".8" fill="#fff"/><circle cx="913" cy="51" r="1.1" fill="#3a3a3a"/></svg>
<div id="tl">
<div class="slot" style="top:0.00px"><b>3:45P</b><i>0 • 0</i></div>
<div class="slot" style="top:44.33px"><b>3:30P</b><i>1 • 4</i></div>
<div class="slot" style="top:88.66px"><b>3:<u>1</u>5P</b><i>2 • 9</i></div>
<div class="slot" style="top:132.99px"><b>3:00P</b><i>0 • 0</i></div>
<div class="slot" style="top:177.32px"><b>2:45P</b><i>0 • 0</i></div>
<div class="slot" style="top:221.65px"><b>2:30P</b><i>0 • 0</i></div>
<div class="slot" style="top:265.98px"><b>2:<u>1</u>5P</b><i>1 • 3</i></div>
<div class="slot" style="top:310.31px"><b>2:00P</b><i>1 • 3</i></div>
<div class="slot" style="top:354.64px"><b><u>1</u>:45P</b><i>0 • 0</i></div>
<div class="slot" style="top:398.97px"><b><u>1</u>:30P</b><i>0 • 0</i></div>
<div class="slot" style="top:443.30px"><b><u>1</u>:<u>1</u>5P</b><i>0 • 0</i></div>
<div class="slot" style="top:487.63px"><b><u>1</u>:00P</b><i>0 • 0</i></div>
<div class="slot" style="top:531.96px"><b><u>1</u>2:45P</b><i>3 • 15</i></div>
<div class="slot" style="top:576.29px"><b><u>1</u>2:30P</b><i>1 • 3</i></div>
<div class="slot" style="top:620.62px"><b><u>1</u>2:<u>1</u>5P</b><i>1 • 4</i></div>
<div class="slot" style="top:664.95px"><b><u>1</u>2:00P</b><i>0 • 0</i></div>
</div>
<div id="nav">
<svg class="abs" style="left:581.6px;top:15.6px" width="13.25" height="15.64" viewBox="0 0 14.4 17" ><g fill="none" stroke="#3ecf8e" stroke-width="1.6" stroke-linecap="round" stroke-linejoin="round"><path d="M1.900 9.500V6.100A5.300 5.300 0 0 1 12.500 6.100V9.500"/><path d="M5.400 1.700V9.300M9 1.700V9.300"/><path d="M1.500 10.200H12.900A1 1 0 0 1 12.900 12.500H1.500A1 1 0 0 1 1.500 10.200Z"/><path d="M2.200 12.700V16.100M12.200 12.700V16.100"/></g></svg>
<div class="nv" style="left:602.2px;color:#3ecf8e">Floor Plan</div>
<svg class="abs" style="left:906.6px;top:16.2px" width="13.2" height="14.6" viewBox="0 0 13.2 14.6" ><g fill="none" stroke="#dcdce1" stroke-width="1.4" stroke-linejoin="round" stroke-linecap="round"><path d="M.8 11.800V2.600A1.800 1.800 0 0 1 2.600 .8H12.400V10.200H2.600A1.700 1.700 0 0 0 2.600 13.800H12.400V10.200"/><path d="M4.200 3.800H9.400M4.200 6.400H9.400"/></g></svg>
<div class="nv" style="left:927.6px;font-size:10.85px">Reservation List</div>
<svg class="abs" style="left:1266.2px;top:16.2px" width="18.6" height="15" viewBox="0 0 18.6 15" ><g fill="none" stroke="#dcdce1" stroke-width="1.4" stroke-linejoin="round"><circle cx="6.6" cy="3.8" r="3.1"/><path d="M.8 14.200C.8 10.800 3.200 9.300 6.600 9.300S12.400 10.800 12.400 14.200Z"/></g><g fill="#dcdce1"><path d="M11.400 .900A3 3 0 1 1 11.400 6.700A4.600 4.600 0 0 0 11.400 .900Z"/><path d="M13.600 9.300C16.400 9.500 18.400 11 18.400 14.200H14.600C14.600 12.200 14.400 10.600 13.600 9.300Z"/></g></svg>
<div class="nv" style="left:1292.6px">Servers</div>
</div>
<div id="help">?</div>
<div class="abs" style="left:1463px;top:0;width:1px;height:792px;background:rgba(0,255,0,.35)"></div><div class="abs" style="left:1464px;top:0;width:1px;height:792px;background:#00ff00"></div>
</body>
</html>
